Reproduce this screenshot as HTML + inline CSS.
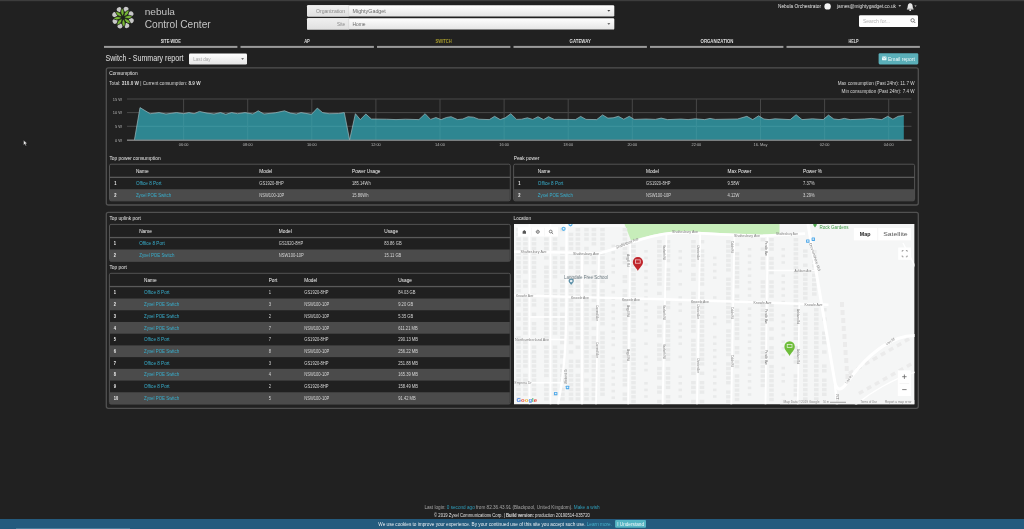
<!DOCTYPE html>
<html><head><meta charset="utf-8"><title>Nebula Control Center</title>
<style>
html,body{margin:0;padding:0;background:#212121;width:1024px;height:529px;overflow:hidden;}
svg{display:block;font-family:"Liberation Sans", sans-serif;will-change:transform;}
</style></head><body>
<svg width="1024" height="529" viewBox="0 0 1024 529">
<rect x="0" y="0" width="1024" height="529" fill="#212121"/>
<rect x="0" y="0" width="1024" height="1.2" fill="#3d3d3d"/>
<g transform="translate(123.0,17.6)"><circle cx="0" cy="-8.7" r="2.55" fill="#c8c8c8" transform="rotate(20)"/><circle cx="0" cy="-8.7" r="2.55" fill="#c8c8c8" transform="rotate(65)"/><circle cx="0" cy="-8.7" r="2.55" fill="#c8c8c8" transform="rotate(110)"/><circle cx="0" cy="-8.7" r="2.55" fill="#c8c8c8" transform="rotate(155)"/><circle cx="0" cy="-8.7" r="2.55" fill="#c8c8c8" transform="rotate(200)"/><circle cx="0" cy="-8.7" r="2.55" fill="#c8c8c8" transform="rotate(245)"/><circle cx="0" cy="-8.7" r="2.55" fill="#c8c8c8" transform="rotate(290)"/><circle cx="0" cy="-8.7" r="2.55" fill="#c8c8c8" transform="rotate(335)"/><path d="M0,-1.2 C1.2,-3 2.0,-5.2 1.5,-6.8 C1.1,-8 0.5,-9 0,-10.1 C-0.5,-9 -1.1,-8 -1.5,-6.8 C-2.0,-5.2 -1.2,-3 0,-1.2Z" fill="#76b633" stroke="#1b1b1b" stroke-width="0.75" transform="rotate(-6)"/><path d="M0,-1.2 C1.2,-3 2.0,-5.2 1.5,-6.8 C1.1,-8 0.5,-9 0,-10.1 C-0.5,-9 -1.1,-8 -1.5,-6.8 C-2.0,-5.2 -1.2,-3 0,-1.2Z" fill="#76b633" stroke="#1b1b1b" stroke-width="0.75" transform="rotate(39)"/><path d="M0,-1.2 C1.2,-3 2.0,-5.2 1.5,-6.8 C1.1,-8 0.5,-9 0,-10.1 C-0.5,-9 -1.1,-8 -1.5,-6.8 C-2.0,-5.2 -1.2,-3 0,-1.2Z" fill="#76b633" stroke="#1b1b1b" stroke-width="0.75" transform="rotate(84)"/><path d="M0,-1.2 C1.2,-3 2.0,-5.2 1.5,-6.8 C1.1,-8 0.5,-9 0,-10.1 C-0.5,-9 -1.1,-8 -1.5,-6.8 C-2.0,-5.2 -1.2,-3 0,-1.2Z" fill="#76b633" stroke="#1b1b1b" stroke-width="0.75" transform="rotate(129)"/><path d="M0,-1.2 C1.2,-3 2.0,-5.2 1.5,-6.8 C1.1,-8 0.5,-9 0,-10.1 C-0.5,-9 -1.1,-8 -1.5,-6.8 C-2.0,-5.2 -1.2,-3 0,-1.2Z" fill="#76b633" stroke="#1b1b1b" stroke-width="0.75" transform="rotate(174)"/><path d="M0,-1.2 C1.2,-3 2.0,-5.2 1.5,-6.8 C1.1,-8 0.5,-9 0,-10.1 C-0.5,-9 -1.1,-8 -1.5,-6.8 C-2.0,-5.2 -1.2,-3 0,-1.2Z" fill="#76b633" stroke="#1b1b1b" stroke-width="0.75" transform="rotate(219)"/><path d="M0,-1.2 C1.2,-3 2.0,-5.2 1.5,-6.8 C1.1,-8 0.5,-9 0,-10.1 C-0.5,-9 -1.1,-8 -1.5,-6.8 C-2.0,-5.2 -1.2,-3 0,-1.2Z" fill="#76b633" stroke="#1b1b1b" stroke-width="0.75" transform="rotate(264)"/><path d="M0,-1.2 C1.2,-3 2.0,-5.2 1.5,-6.8 C1.1,-8 0.5,-9 0,-10.1 C-0.5,-9 -1.1,-8 -1.5,-6.8 C-2.0,-5.2 -1.2,-3 0,-1.2Z" fill="#76b633" stroke="#1b1b1b" stroke-width="0.75" transform="rotate(309)"/></g>
<text x="144.70" y="15.06" font-size="9.6" fill="#c4c4c4" textLength="30.30" lengthAdjust="spacingAndGlyphs">nebula</text>
<text x="144.70" y="27.94" font-size="10.4" fill="#c4c4c4" textLength="66.00" lengthAdjust="spacingAndGlyphs">Control Center</text>
<defs><linearGradient id="gsel" x1="0" y1="0" x2="0" y2="1"><stop offset="0" stop-color="#ffffff"/><stop offset="1" stop-color="#e4e4e4"/></linearGradient><linearGradient id="glab" x1="0" y1="0" x2="0" y2="1"><stop offset="0" stop-color="#f0f0f0"/><stop offset="1" stop-color="#e0e0e0"/></linearGradient></defs>
<rect x="307" y="5.2" width="307.3" height="11.3" rx="1.2" fill="url(#gsel)"/>
<rect x="307" y="5.2" width="42" height="11.3" rx="1.2" fill="url(#glab)"/>
<rect x="348.5" y="5.2" width="0.6" height="11.3" fill="#d6d6d6"/>
<text x="316.00" y="13.12" font-size="5.6" fill="#8a8a8a" textLength="29.00" lengthAdjust="spacingAndGlyphs">Organization</text>
<text x="352.50" y="13.12" font-size="5.6" fill="#6a6a6a" textLength="33.30" lengthAdjust="spacingAndGlyphs">MightyGadget</text>
<path d="M607.3,10.100000000000001 h3 l-1.5,1.6z" fill="#444"/>
<rect x="307" y="18.3" width="307.3" height="11.3" rx="1.2" fill="url(#gsel)"/>
<rect x="307" y="18.3" width="42" height="11.3" rx="1.2" fill="url(#glab)"/>
<rect x="348.5" y="18.3" width="0.6" height="11.3" fill="#d6d6d6"/>
<text x="337.00" y="26.22" font-size="5.6" fill="#8a8a8a" textLength="8.00" lengthAdjust="spacingAndGlyphs">Site</text>
<text x="352.50" y="26.22" font-size="5.6" fill="#6a6a6a" textLength="13.10" lengthAdjust="spacingAndGlyphs">Home</text>
<path d="M607.3,23.200000000000003 h3 l-1.5,1.6z" fill="#444"/>
<text x="778.00" y="8.24" font-size="5.4" fill="#e6e6e6" textLength="43.00" lengthAdjust="spacingAndGlyphs">Nebula Orchestrator</text>
<circle cx="827.6" cy="6.4" r="3.2" fill="#f4f4f4"/>
<text x="837.00" y="8.04" font-size="5.4" fill="#e0e0e0" textLength="59.00" lengthAdjust="spacingAndGlyphs">james@mightygadget.co.uk</text>
<path d="M898.5,5.2 h2.6 l-1.3,1.5z" fill="#ddd"/>
<path d="M907.2,8.8 C907.6,8 907.6,6.8 907.9,5.3 C908.2,3.9 909.2,3.3 910.2,3.3 C911.2,3.3 912.2,3.9 912.5,5.3 C912.8,6.8 912.8,8 913.2,8.8 Z" fill="#e8e8e8"/>
<rect x="906.8" y="8.4" width="6.8" height="1.1" rx="0.5" fill="#e8e8e8"/><circle cx="910.2" cy="10.2" r="0.9" fill="#e8e8e8"/>
<path d="M914.3,5.4 h2.4 l-1.2,1.4z" fill="#ddd"/>
<rect x="859" y="15.2" width="59" height="11.8" rx="1.3" fill="#ffffff"/>
<text x="863.00" y="23.36" font-size="6.0" fill="#b4b4b4" textLength="27.00" lengthAdjust="spacingAndGlyphs">Search for...</text>
<circle cx="912.6" cy="20.3" r="1.7" fill="none" stroke="#666" stroke-width="0.8"/><path d="M913.8,21.5 l1.5,1.5" stroke="#666" stroke-width="0.9"/>
<rect x="104.00" y="45.9" width="133.4" height="2" fill="#9b9b9b"/>
<text x="160.65" y="42.76" font-size="4.6" fill="#dedede" font-weight="bold" textLength="20.10" lengthAdjust="spacingAndGlyphs">SITE-WIDE</text>
<rect x="240.50" y="45.9" width="133.4" height="2" fill="#9b9b9b"/>
<text x="304.15" y="42.76" font-size="4.6" fill="#dedede" font-weight="bold" textLength="5.70" lengthAdjust="spacingAndGlyphs">AP</text>
<rect x="377.00" y="45.9" width="133.4" height="2" fill="#9b9b9b"/>
<text x="435.60" y="42.76" font-size="4.6" fill="#a89c2c" font-weight="bold" textLength="16.20" lengthAdjust="spacingAndGlyphs">SWITCH</text>
<rect x="513.50" y="45.9" width="133.4" height="2" fill="#9b9b9b"/>
<text x="569.55" y="42.76" font-size="4.6" fill="#dedede" font-weight="bold" textLength="21.30" lengthAdjust="spacingAndGlyphs">GATEWAY</text>
<rect x="650.00" y="45.9" width="133.4" height="2" fill="#9b9b9b"/>
<text x="700.60" y="42.76" font-size="4.6" fill="#dedede" font-weight="bold" textLength="32.80" lengthAdjust="spacingAndGlyphs">ORGANIZATION</text>
<rect x="786.50" y="45.9" width="133.4" height="2" fill="#9b9b9b"/>
<text x="848.40" y="42.76" font-size="4.6" fill="#dedede" font-weight="bold" textLength="10.20" lengthAdjust="spacingAndGlyphs">HELP</text>
<text x="105.50" y="61.12" font-size="8.4" fill="#e2e2e2" textLength="78.10" lengthAdjust="spacingAndGlyphs">Switch - Summary report</text>
<rect x="189" y="53.6" width="58" height="10.9" rx="1.3" fill="url(#gsel)"/>
<text x="193.20" y="61.04" font-size="5.4" fill="#a8a8a8" textLength="17.50" lengthAdjust="spacingAndGlyphs">Last day</text>
<path d="M241.2,58.3 h2.8 l-1.4,1.5z" fill="#444"/>
<rect x="878.6" y="53.2" width="39.7" height="11.2" rx="1.3" fill="#5aafb9"/>
<rect x="882" y="56.6" width="4.5" height="3.6" rx="0.4" fill="#e6f6f8"/><path d="M882,56.8 l2.25,1.8 l2.25,-1.8" fill="none" stroke="#5db5bf" stroke-width="0.5"/>
<text x="888.00" y="60.74" font-size="5.4" fill="#eef8f9" textLength="26.80" lengthAdjust="spacingAndGlyphs">Email report</text>
<rect x="106.3" y="67.8" width="812" height="137.2" rx="2" fill="none" stroke="#515151" stroke-width="1.3"/>
<rect x="106.3" y="212.3" width="812" height="196" rx="2" fill="none" stroke="#515151" stroke-width="1.3"/>
<text x="109.20" y="75.04" font-size="5.4" fill="#e6e6e6" textLength="28.50" lengthAdjust="spacingAndGlyphs">Consumption</text>
<text x="109.3" y="84.9" font-size="5.2" fill="#d8d8d8" textLength="91.3" lengthAdjust="spacingAndGlyphs">Total: <tspan font-weight="bold">310.0 W</tspan> | Current consumption: <tspan font-weight="bold">8.9 W</tspan></text>
<text x="837.70" y="84.87" font-size="5.2" fill="#d8d8d8" textLength="76.90" lengthAdjust="spacingAndGlyphs">Max consumption (Past 24hr): 11.7 W</text>
<text x="841.60" y="92.97" font-size="5.2" fill="#d8d8d8" textLength="73.00" lengthAdjust="spacingAndGlyphs">Min consumption (Past 24hr): 7.4 W</text>
<rect x="127" y="98.50" width="784.5" height="1" fill="#4a4a4a"/>
<text x="112.66" y="100.58" font-size="4.4" fill="#b8b8b8" textLength="9.34" lengthAdjust="spacingAndGlyphs">15 W</text>
<rect x="127" y="112.10" width="784.5" height="1" fill="#4a4a4a"/>
<text x="112.66" y="114.18" font-size="4.4" fill="#b8b8b8" textLength="9.34" lengthAdjust="spacingAndGlyphs">10 W</text>
<rect x="127" y="125.80" width="784.5" height="1" fill="#4a4a4a"/>
<text x="114.89" y="127.88" font-size="4.4" fill="#b8b8b8" textLength="7.11" lengthAdjust="spacingAndGlyphs">5 W</text>
<rect x="127" y="139.70" width="784.5" height="1" fill="#4a4a4a"/>
<text x="114.89" y="141.78" font-size="4.4" fill="#b8b8b8" textLength="7.11" lengthAdjust="spacingAndGlyphs">0 W</text>
<rect x="183.10" y="99" width="1" height="41" fill="#474747"/>
<text x="178.72" y="145.81" font-size="4.2" fill="#b8b8b8" textLength="9.76" lengthAdjust="spacingAndGlyphs">06:00</text>
<rect x="247.20" y="99" width="1" height="41" fill="#474747"/>
<text x="242.82" y="145.81" font-size="4.2" fill="#b8b8b8" textLength="9.76" lengthAdjust="spacingAndGlyphs">08:00</text>
<rect x="311.30" y="99" width="1" height="41" fill="#474747"/>
<text x="306.92" y="145.81" font-size="4.2" fill="#b8b8b8" textLength="9.76" lengthAdjust="spacingAndGlyphs">10:00</text>
<rect x="375.40" y="99" width="1" height="41" fill="#474747"/>
<text x="371.02" y="145.81" font-size="4.2" fill="#b8b8b8" textLength="9.76" lengthAdjust="spacingAndGlyphs">12:00</text>
<rect x="439.50" y="99" width="1" height="41" fill="#474747"/>
<text x="435.12" y="145.81" font-size="4.2" fill="#b8b8b8" textLength="9.76" lengthAdjust="spacingAndGlyphs">14:00</text>
<rect x="503.60" y="99" width="1" height="41" fill="#474747"/>
<text x="499.22" y="145.81" font-size="4.2" fill="#b8b8b8" textLength="9.76" lengthAdjust="spacingAndGlyphs">16:00</text>
<rect x="567.70" y="99" width="1" height="41" fill="#474747"/>
<text x="563.32" y="145.81" font-size="4.2" fill="#b8b8b8" textLength="9.76" lengthAdjust="spacingAndGlyphs">18:00</text>
<rect x="631.80" y="99" width="1" height="41" fill="#474747"/>
<text x="627.42" y="145.81" font-size="4.2" fill="#b8b8b8" textLength="9.76" lengthAdjust="spacingAndGlyphs">20:00</text>
<rect x="695.90" y="99" width="1" height="41" fill="#474747"/>
<text x="691.52" y="145.81" font-size="4.2" fill="#b8b8b8" textLength="9.76" lengthAdjust="spacingAndGlyphs">22:00</text>
<rect x="760.00" y="99" width="1" height="41" fill="#474747"/>
<text x="753.56" y="145.81" font-size="4.2" fill="#b8b8b8" textLength="13.87" lengthAdjust="spacingAndGlyphs">16. May</text>
<rect x="824.10" y="99" width="1" height="41" fill="#474747"/>
<text x="819.72" y="145.81" font-size="4.2" fill="#b8b8b8" textLength="9.76" lengthAdjust="spacingAndGlyphs">02:00</text>
<rect x="888.20" y="99" width="1" height="41" fill="#474747"/>
<text x="883.82" y="145.81" font-size="4.2" fill="#b8b8b8" textLength="9.76" lengthAdjust="spacingAndGlyphs">04:00</text>
<path d="M134.4,140.2 L134.4,140.1 140.0,107.6 150.2,113.7 159.0,112.6 166.0,114.0 176.6,112.6 183.6,113.7 188.9,112.6 194.1,113.7 199.4,111.4 207.0,113.1 214.0,114.0 220.5,112.6 225.8,114.3 231.6,112.6 237.5,113.7 245.0,112.6 252.9,114.0 258.2,110.8 264.0,114.0 275.2,112.8 284.5,110.8 290.4,113.1 296.3,114.0 301.0,112.6 311.5,114.3 317.3,108.1 322.6,112.6 329.1,113.7 338.4,113.5 344.3,112.6 349.6,140.0 355.4,113.7 360.3,119.6 365.8,114.0 371.4,119.0 386.6,119.2 396.0,119.6 405.4,119.2 418.9,119.6 425.1,113.7 430.6,119.4 435.9,117.5 441.1,119.6 446.4,117.5 451.1,116.7 457.5,119.6 462.8,119.0 468.1,116.7 473.5,117.2 478.8,119.2 489.3,119.6 494.6,116.3 500.2,119.6 505.2,117.8 510.8,113.7 516.6,119.4 521.6,119.2 527.4,117.8 532.7,119.4 538.0,116.7 543.6,119.6 548.5,116.7 554.4,119.4 566.1,119.4 575.5,119.6 580.7,116.4 586.0,119.4 596.7,119.6 602.6,114.9 607.9,118.1 613.1,117.8 618.4,116.3 623.7,119.2 629.3,116.3 634.2,119.4 645.9,119.0 655.3,119.4 661.2,118.1 667.6,119.6 681.1,119.0 688.1,119.6 695.2,118.8 704.7,119.6 710.0,118.4 715.2,119.4 737.5,119.0 746.9,116.3 752.7,119.6 758.6,115.8 763.9,119.0 769.1,119.6 775.0,118.8 790.2,119.6 796.1,114.7 802.0,119.6 812.5,118.8 823.2,119.6 828.5,115.1 833.8,119.0 839.0,119.6 844.3,118.4 850.2,119.6 864.2,119.0 871.3,118.4 881.8,119.6 887.7,116.3 892.9,119.2 898.2,116.3 903.8,115.5 L903.8,140.2 Z" fill="#2e8691"/>
<clipPath id="careaclip"><path d="M134.4,140.2 L134.4,140.1 140.0,107.6 150.2,113.7 159.0,112.6 166.0,114.0 176.6,112.6 183.6,113.7 188.9,112.6 194.1,113.7 199.4,111.4 207.0,113.1 214.0,114.0 220.5,112.6 225.8,114.3 231.6,112.6 237.5,113.7 245.0,112.6 252.9,114.0 258.2,110.8 264.0,114.0 275.2,112.8 284.5,110.8 290.4,113.1 296.3,114.0 301.0,112.6 311.5,114.3 317.3,108.1 322.6,112.6 329.1,113.7 338.4,113.5 344.3,112.6 349.6,140.0 355.4,113.7 360.3,119.6 365.8,114.0 371.4,119.0 386.6,119.2 396.0,119.6 405.4,119.2 418.9,119.6 425.1,113.7 430.6,119.4 435.9,117.5 441.1,119.6 446.4,117.5 451.1,116.7 457.5,119.6 462.8,119.0 468.1,116.7 473.5,117.2 478.8,119.2 489.3,119.6 494.6,116.3 500.2,119.6 505.2,117.8 510.8,113.7 516.6,119.4 521.6,119.2 527.4,117.8 532.7,119.4 538.0,116.7 543.6,119.6 548.5,116.7 554.4,119.4 566.1,119.4 575.5,119.6 580.7,116.4 586.0,119.4 596.7,119.6 602.6,114.9 607.9,118.1 613.1,117.8 618.4,116.3 623.7,119.2 629.3,116.3 634.2,119.4 645.9,119.0 655.3,119.4 661.2,118.1 667.6,119.6 681.1,119.0 688.1,119.6 695.2,118.8 704.7,119.6 710.0,118.4 715.2,119.4 737.5,119.0 746.9,116.3 752.7,119.6 758.6,115.8 763.9,119.0 769.1,119.6 775.0,118.8 790.2,119.6 796.1,114.7 802.0,119.6 812.5,118.8 823.2,119.6 828.5,115.1 833.8,119.0 839.0,119.6 844.3,118.4 850.2,119.6 864.2,119.0 871.3,118.4 881.8,119.6 887.7,116.3 892.9,119.2 898.2,116.3 903.8,115.5 L903.8,140.2 Z"/></clipPath>
<g clip-path="url(#careaclip)">
<rect x="127" y="125.8" width="784" height="1" fill="#3f949e"/>
<rect x="183.10" y="99" width="1" height="41" fill="#3b9099"/>
<rect x="247.20" y="99" width="1" height="41" fill="#3b9099"/>
<rect x="311.30" y="99" width="1" height="41" fill="#3b9099"/>
<rect x="375.40" y="99" width="1" height="41" fill="#3b9099"/>
<rect x="439.50" y="99" width="1" height="41" fill="#3b9099"/>
<rect x="503.60" y="99" width="1" height="41" fill="#3b9099"/>
<rect x="567.70" y="99" width="1" height="41" fill="#3b9099"/>
<rect x="631.80" y="99" width="1" height="41" fill="#3b9099"/>
<rect x="695.90" y="99" width="1" height="41" fill="#3b9099"/>
<rect x="760.00" y="99" width="1" height="41" fill="#3b9099"/>
<rect x="824.10" y="99" width="1" height="41" fill="#3b9099"/>
<rect x="888.20" y="99" width="1" height="41" fill="#3b9099"/>
</g>
<polyline points="134.4,140.1 140.0,107.6 150.2,113.7 159.0,112.6 166.0,114.0 176.6,112.6 183.6,113.7 188.9,112.6 194.1,113.7 199.4,111.4 207.0,113.1 214.0,114.0 220.5,112.6 225.8,114.3 231.6,112.6 237.5,113.7 245.0,112.6 252.9,114.0 258.2,110.8 264.0,114.0 275.2,112.8 284.5,110.8 290.4,113.1 296.3,114.0 301.0,112.6 311.5,114.3 317.3,108.1 322.6,112.6 329.1,113.7 338.4,113.5 344.3,112.6 349.6,140.0 355.4,113.7 360.3,119.6 365.8,114.0 371.4,119.0 386.6,119.2 396.0,119.6 405.4,119.2 418.9,119.6 425.1,113.7 430.6,119.4 435.9,117.5 441.1,119.6 446.4,117.5 451.1,116.7 457.5,119.6 462.8,119.0 468.1,116.7 473.5,117.2 478.8,119.2 489.3,119.6 494.6,116.3 500.2,119.6 505.2,117.8 510.8,113.7 516.6,119.4 521.6,119.2 527.4,117.8 532.7,119.4 538.0,116.7 543.6,119.6 548.5,116.7 554.4,119.4 566.1,119.4 575.5,119.6 580.7,116.4 586.0,119.4 596.7,119.6 602.6,114.9 607.9,118.1 613.1,117.8 618.4,116.3 623.7,119.2 629.3,116.3 634.2,119.4 645.9,119.0 655.3,119.4 661.2,118.1 667.6,119.6 681.1,119.0 688.1,119.6 695.2,118.8 704.7,119.6 710.0,118.4 715.2,119.4 737.5,119.0 746.9,116.3 752.7,119.6 758.6,115.8 763.9,119.0 769.1,119.6 775.0,118.8 790.2,119.6 796.1,114.7 802.0,119.6 812.5,118.8 823.2,119.6 828.5,115.1 833.8,119.0 839.0,119.6 844.3,118.4 850.2,119.6 864.2,119.0 871.3,118.4 881.8,119.6 887.7,116.3 892.9,119.2 898.2,116.3 903.8,115.5" fill="none" stroke="#9fb9bd" stroke-width="0.7"/>
<rect x="127" y="139.6" width="784.5" height="1.2" fill="#8a8a8a"/>
<text x="109.40" y="160.07" font-size="5.2" fill="#e6e6e6" textLength="51.22" lengthAdjust="spacingAndGlyphs">Top power consumption</text>
<rect x="109.50" y="164.20" width="400.80" height="36.60" rx="1.5" fill="#202020" stroke="#535353" stroke-width="1"/>
<rect x="110.00" y="189.20" width="399.80" height="11.60" fill="#4b4b4b"/>
<rect x="109.50" y="176.70" width="400.80" height="1.3" fill="#5a5a5a"/>
<text x="135.90" y="172.70" font-size="5.0" fill="#f4f4f4" textLength="12.67" lengthAdjust="spacingAndGlyphs">Name</text>
<text x="259.30" y="172.70" font-size="5.0" fill="#f4f4f4" textLength="12.94" lengthAdjust="spacingAndGlyphs">Model</text>
<text x="352.00" y="172.70" font-size="5.0" fill="#f4f4f4" textLength="28.51" lengthAdjust="spacingAndGlyphs">Power Usage</text>
<text x="114.20" y="185.09" font-size="4.7" fill="#f0f0f0" font-weight="bold" textLength="2.22" lengthAdjust="spacingAndGlyphs">1</text>
<text x="135.90" y="185.13" font-size="4.8" fill="#38b0cf" textLength="25.59" lengthAdjust="spacingAndGlyphs">Office 8 Port</text>
<text x="259.30" y="185.09" font-size="4.7" fill="#d6d6d6" textLength="24.38" lengthAdjust="spacingAndGlyphs">GS1920-8HP</text>
<text x="352.00" y="185.09" font-size="4.7" fill="#d6d6d6" textLength="18.69" lengthAdjust="spacingAndGlyphs">185.14Wh</text>
<text x="114.20" y="196.69" font-size="4.7" fill="#f0f0f0" font-weight="bold" textLength="2.22" lengthAdjust="spacingAndGlyphs">2</text>
<text x="135.90" y="196.73" font-size="4.8" fill="#38b0cf" textLength="35.21" lengthAdjust="spacingAndGlyphs">Zyxel POE Switch</text>
<text x="259.30" y="196.69" font-size="4.7" fill="#d6d6d6" textLength="25.07" lengthAdjust="spacingAndGlyphs">NSW100-10P</text>
<text x="352.00" y="196.69" font-size="4.7" fill="#d6d6d6" textLength="16.41" lengthAdjust="spacingAndGlyphs">15.86Wh</text>
<text x="513.70" y="159.87" font-size="5.2" fill="#e6e6e6" textLength="25.61" lengthAdjust="spacingAndGlyphs">Peak power</text>
<rect x="513.60" y="164.20" width="401.00" height="36.60" rx="1.5" fill="#202020" stroke="#535353" stroke-width="1"/>
<rect x="514.10" y="189.20" width="400.00" height="11.60" fill="#4b4b4b"/>
<rect x="513.60" y="176.70" width="401.00" height="1.3" fill="#5a5a5a"/>
<text x="537.80" y="172.70" font-size="5.0" fill="#f4f4f4" textLength="12.67" lengthAdjust="spacingAndGlyphs">Name</text>
<text x="646.00" y="172.70" font-size="5.0" fill="#f4f4f4" textLength="12.94" lengthAdjust="spacingAndGlyphs">Model</text>
<text x="727.60" y="172.70" font-size="5.0" fill="#f4f4f4" textLength="23.76" lengthAdjust="spacingAndGlyphs">Max Power</text>
<text x="803.00" y="172.70" font-size="5.0" fill="#f4f4f4" textLength="19.01" lengthAdjust="spacingAndGlyphs">Power %</text>
<text x="518.30" y="185.09" font-size="4.7" fill="#f0f0f0" font-weight="bold" textLength="2.22" lengthAdjust="spacingAndGlyphs">1</text>
<text x="537.80" y="185.13" font-size="4.8" fill="#38b0cf" textLength="25.59" lengthAdjust="spacingAndGlyphs">Office 8 Port</text>
<text x="646.00" y="185.09" font-size="4.7" fill="#d6d6d6" textLength="24.38" lengthAdjust="spacingAndGlyphs">GS1920-8HP</text>
<text x="727.60" y="185.09" font-size="4.7" fill="#d6d6d6" textLength="11.85" lengthAdjust="spacingAndGlyphs">9.58W</text>
<text x="803.00" y="185.09" font-size="4.7" fill="#d6d6d6" textLength="11.62" lengthAdjust="spacingAndGlyphs">7.37%</text>
<text x="518.30" y="196.69" font-size="4.7" fill="#f0f0f0" font-weight="bold" textLength="2.22" lengthAdjust="spacingAndGlyphs">2</text>
<text x="537.80" y="196.73" font-size="4.8" fill="#38b0cf" textLength="35.21" lengthAdjust="spacingAndGlyphs">Zyxel POE Switch</text>
<text x="646.00" y="196.69" font-size="4.7" fill="#d6d6d6" textLength="25.07" lengthAdjust="spacingAndGlyphs">NSW100-10P</text>
<text x="727.60" y="196.69" font-size="4.7" fill="#d6d6d6" textLength="11.85" lengthAdjust="spacingAndGlyphs">4.12W</text>
<text x="803.00" y="196.69" font-size="4.7" fill="#d6d6d6" textLength="11.62" lengthAdjust="spacingAndGlyphs">3.29%</text>
<text x="109.40" y="219.87" font-size="5.2" fill="#e6e6e6" textLength="31.54" lengthAdjust="spacingAndGlyphs">Top uplink port</text>
<rect x="109.50" y="224.40" width="400.80" height="36.80" rx="1.5" fill="#202020" stroke="#535353" stroke-width="1"/>
<rect x="110.00" y="249.50" width="399.80" height="11.70" fill="#4b4b4b"/>
<rect x="109.50" y="236.90" width="400.80" height="1.3" fill="#5a5a5a"/>
<text x="139.20" y="232.90" font-size="5.0" fill="#f4f4f4" textLength="12.67" lengthAdjust="spacingAndGlyphs">Name</text>
<text x="278.80" y="232.90" font-size="5.0" fill="#f4f4f4" textLength="12.94" lengthAdjust="spacingAndGlyphs">Model</text>
<text x="384.30" y="232.90" font-size="5.0" fill="#f4f4f4" textLength="13.73" lengthAdjust="spacingAndGlyphs">Usage</text>
<text x="113.80" y="245.34" font-size="4.7" fill="#f0f0f0" font-weight="bold" textLength="2.22" lengthAdjust="spacingAndGlyphs">1</text>
<text x="139.20" y="245.38" font-size="4.8" fill="#38b0cf" textLength="25.59" lengthAdjust="spacingAndGlyphs">Office 8 Port</text>
<text x="278.80" y="245.34" font-size="4.7" fill="#d6d6d6" textLength="24.38" lengthAdjust="spacingAndGlyphs">GS1920-8HP</text>
<text x="384.30" y="245.34" font-size="4.7" fill="#d6d6d6" textLength="17.32" lengthAdjust="spacingAndGlyphs">83.86 GB</text>
<text x="113.80" y="257.04" font-size="4.7" fill="#f0f0f0" font-weight="bold" textLength="2.22" lengthAdjust="spacingAndGlyphs">2</text>
<text x="139.20" y="257.08" font-size="4.8" fill="#38b0cf" textLength="35.21" lengthAdjust="spacingAndGlyphs">Zyxel POE Switch</text>
<text x="278.80" y="257.04" font-size="4.7" fill="#d6d6d6" textLength="25.07" lengthAdjust="spacingAndGlyphs">NSW100-10P</text>
<text x="384.30" y="257.04" font-size="4.7" fill="#d6d6d6" textLength="17.02" lengthAdjust="spacingAndGlyphs">15.11 GB</text>
<text x="109.40" y="268.77" font-size="5.2" fill="#e6e6e6" textLength="17.52" lengthAdjust="spacingAndGlyphs">Top port</text>
<rect x="109.40" y="273.30" width="400.90" height="130.70" rx="1.5" fill="#202020" stroke="#535353" stroke-width="1"/>
<rect x="109.90" y="298.52" width="399.90" height="11.72" fill="#4b4b4b"/>
<rect x="109.90" y="321.96" width="399.90" height="11.72" fill="#4b4b4b"/>
<rect x="109.90" y="345.40" width="399.90" height="11.72" fill="#4b4b4b"/>
<rect x="109.90" y="368.84" width="399.90" height="11.72" fill="#4b4b4b"/>
<rect x="109.90" y="392.28" width="399.90" height="11.72" fill="#4b4b4b"/>
<rect x="109.40" y="285.90" width="400.90" height="1.3" fill="#5a5a5a"/>
<text x="144.00" y="281.85" font-size="5.0" fill="#f4f4f4" textLength="12.67" lengthAdjust="spacingAndGlyphs">Name</text>
<text x="268.70" y="281.85" font-size="5.0" fill="#f4f4f4" textLength="8.71" lengthAdjust="spacingAndGlyphs">Port</text>
<text x="304.20" y="281.85" font-size="5.0" fill="#f4f4f4" textLength="12.94" lengthAdjust="spacingAndGlyphs">Model</text>
<text x="398.20" y="281.85" font-size="5.0" fill="#f4f4f4" textLength="13.73" lengthAdjust="spacingAndGlyphs">Usage</text>
<text x="113.80" y="294.35" font-size="4.7" fill="#f0f0f0" font-weight="bold" textLength="2.22" lengthAdjust="spacingAndGlyphs">1</text>
<text x="144.00" y="294.39" font-size="4.8" fill="#38b0cf" textLength="25.59" lengthAdjust="spacingAndGlyphs">Office 8 Port</text>
<text x="268.70" y="294.35" font-size="4.7" fill="#d6d6d6" textLength="2.28" lengthAdjust="spacingAndGlyphs">1</text>
<text x="304.20" y="294.35" font-size="4.7" fill="#d6d6d6" textLength="24.38" lengthAdjust="spacingAndGlyphs">GS1920-8HP</text>
<text x="398.20" y="294.35" font-size="4.7" fill="#d6d6d6" textLength="17.32" lengthAdjust="spacingAndGlyphs">84.03 GB</text>
<text x="113.80" y="306.07" font-size="4.7" fill="#f0f0f0" font-weight="bold" textLength="2.22" lengthAdjust="spacingAndGlyphs">2</text>
<text x="144.00" y="306.11" font-size="4.8" fill="#38b0cf" textLength="35.21" lengthAdjust="spacingAndGlyphs">Zyxel POE Switch</text>
<text x="268.70" y="306.07" font-size="4.7" fill="#d6d6d6" textLength="2.28" lengthAdjust="spacingAndGlyphs">3</text>
<text x="304.20" y="306.07" font-size="4.7" fill="#d6d6d6" textLength="25.07" lengthAdjust="spacingAndGlyphs">NSW100-10P</text>
<text x="398.20" y="306.07" font-size="4.7" fill="#d6d6d6" textLength="15.04" lengthAdjust="spacingAndGlyphs">9.20 GB</text>
<text x="113.80" y="317.79" font-size="4.7" fill="#f0f0f0" font-weight="bold" textLength="2.22" lengthAdjust="spacingAndGlyphs">3</text>
<text x="144.00" y="317.83" font-size="4.8" fill="#38b0cf" textLength="35.21" lengthAdjust="spacingAndGlyphs">Zyxel POE Switch</text>
<text x="268.70" y="317.79" font-size="4.7" fill="#d6d6d6" textLength="2.28" lengthAdjust="spacingAndGlyphs">2</text>
<text x="304.20" y="317.79" font-size="4.7" fill="#d6d6d6" textLength="25.07" lengthAdjust="spacingAndGlyphs">NSW100-10P</text>
<text x="398.20" y="317.79" font-size="4.7" fill="#d6d6d6" textLength="15.04" lengthAdjust="spacingAndGlyphs">5.35 GB</text>
<text x="113.80" y="329.51" font-size="4.7" fill="#f0f0f0" font-weight="bold" textLength="2.22" lengthAdjust="spacingAndGlyphs">4</text>
<text x="144.00" y="329.55" font-size="4.8" fill="#38b0cf" textLength="35.21" lengthAdjust="spacingAndGlyphs">Zyxel POE Switch</text>
<text x="268.70" y="329.51" font-size="4.7" fill="#d6d6d6" textLength="2.28" lengthAdjust="spacingAndGlyphs">7</text>
<text x="304.20" y="329.51" font-size="4.7" fill="#d6d6d6" textLength="25.07" lengthAdjust="spacingAndGlyphs">NSW100-10P</text>
<text x="398.20" y="329.51" font-size="4.7" fill="#d6d6d6" textLength="19.52" lengthAdjust="spacingAndGlyphs">611.21 MB</text>
<text x="113.80" y="341.23" font-size="4.7" fill="#f0f0f0" font-weight="bold" textLength="2.22" lengthAdjust="spacingAndGlyphs">5</text>
<text x="144.00" y="341.27" font-size="4.8" fill="#38b0cf" textLength="25.59" lengthAdjust="spacingAndGlyphs">Office 8 Port</text>
<text x="268.70" y="341.23" font-size="4.7" fill="#d6d6d6" textLength="2.28" lengthAdjust="spacingAndGlyphs">7</text>
<text x="304.20" y="341.23" font-size="4.7" fill="#d6d6d6" textLength="24.38" lengthAdjust="spacingAndGlyphs">GS1920-8HP</text>
<text x="398.20" y="341.23" font-size="4.7" fill="#d6d6d6" textLength="19.83" lengthAdjust="spacingAndGlyphs">290.13 MB</text>
<text x="113.80" y="352.95" font-size="4.7" fill="#f0f0f0" font-weight="bold" textLength="2.22" lengthAdjust="spacingAndGlyphs">6</text>
<text x="144.00" y="352.99" font-size="4.8" fill="#38b0cf" textLength="35.21" lengthAdjust="spacingAndGlyphs">Zyxel POE Switch</text>
<text x="268.70" y="352.95" font-size="4.7" fill="#d6d6d6" textLength="2.28" lengthAdjust="spacingAndGlyphs">8</text>
<text x="304.20" y="352.95" font-size="4.7" fill="#d6d6d6" textLength="25.07" lengthAdjust="spacingAndGlyphs">NSW100-10P</text>
<text x="398.20" y="352.95" font-size="4.7" fill="#d6d6d6" textLength="19.83" lengthAdjust="spacingAndGlyphs">256.22 MB</text>
<text x="113.80" y="364.67" font-size="4.7" fill="#f0f0f0" font-weight="bold" textLength="2.22" lengthAdjust="spacingAndGlyphs">7</text>
<text x="144.00" y="364.71" font-size="4.8" fill="#38b0cf" textLength="25.59" lengthAdjust="spacingAndGlyphs">Office 8 Port</text>
<text x="268.70" y="364.67" font-size="4.7" fill="#d6d6d6" textLength="2.28" lengthAdjust="spacingAndGlyphs">3</text>
<text x="304.20" y="364.67" font-size="4.7" fill="#d6d6d6" textLength="24.38" lengthAdjust="spacingAndGlyphs">GS1920-8HP</text>
<text x="398.20" y="364.67" font-size="4.7" fill="#d6d6d6" textLength="19.83" lengthAdjust="spacingAndGlyphs">251.88 MB</text>
<text x="113.80" y="376.39" font-size="4.7" fill="#f0f0f0" font-weight="bold" textLength="2.22" lengthAdjust="spacingAndGlyphs">8</text>
<text x="144.00" y="376.43" font-size="4.8" fill="#38b0cf" textLength="35.21" lengthAdjust="spacingAndGlyphs">Zyxel POE Switch</text>
<text x="268.70" y="376.39" font-size="4.7" fill="#d6d6d6" textLength="2.28" lengthAdjust="spacingAndGlyphs">4</text>
<text x="304.20" y="376.39" font-size="4.7" fill="#d6d6d6" textLength="25.07" lengthAdjust="spacingAndGlyphs">NSW100-10P</text>
<text x="398.20" y="376.39" font-size="4.7" fill="#d6d6d6" textLength="19.83" lengthAdjust="spacingAndGlyphs">165.39 MB</text>
<text x="113.80" y="388.11" font-size="4.7" fill="#f0f0f0" font-weight="bold" textLength="2.22" lengthAdjust="spacingAndGlyphs">9</text>
<text x="144.00" y="388.15" font-size="4.8" fill="#38b0cf" textLength="25.59" lengthAdjust="spacingAndGlyphs">Office 8 Port</text>
<text x="268.70" y="388.11" font-size="4.7" fill="#d6d6d6" textLength="2.28" lengthAdjust="spacingAndGlyphs">2</text>
<text x="304.20" y="388.11" font-size="4.7" fill="#d6d6d6" textLength="24.38" lengthAdjust="spacingAndGlyphs">GS1920-8HP</text>
<text x="398.20" y="388.11" font-size="4.7" fill="#d6d6d6" textLength="19.83" lengthAdjust="spacingAndGlyphs">158.49 MB</text>
<text x="113.80" y="399.83" font-size="4.7" fill="#f0f0f0" font-weight="bold" textLength="4.45" lengthAdjust="spacingAndGlyphs">10</text>
<text x="144.00" y="399.87" font-size="4.8" fill="#38b0cf" textLength="35.21" lengthAdjust="spacingAndGlyphs">Zyxel POE Switch</text>
<text x="268.70" y="399.83" font-size="4.7" fill="#d6d6d6" textLength="2.28" lengthAdjust="spacingAndGlyphs">5</text>
<text x="304.20" y="399.83" font-size="4.7" fill="#d6d6d6" textLength="25.07" lengthAdjust="spacingAndGlyphs">NSW100-10P</text>
<text x="398.20" y="399.83" font-size="4.7" fill="#d6d6d6" textLength="17.55" lengthAdjust="spacingAndGlyphs">91.42 MB</text>
<text x="513.60" y="220.07" font-size="5.2" fill="#e6e6e6" textLength="17.39" lengthAdjust="spacingAndGlyphs">Location</text>
<clipPath id="mclip"><rect x="514" y="224" width="400.6" height="180.5"/></clipPath>
<g clip-path="url(#mclip)">
<rect x="514" y="224" width="400.6" height="180.5" fill="#f5f6f6"/>
<path d="M624.5,224 L631,240.6 C645,236.5 662,231.6 684,231 L720,233 L760,234.6 L779.5,234.8 L779.5,224 Z" fill="#c7edba"/>
<rect x="516.2" y="228.0" width="4.6" height="3.4" fill="#e9eaea"/>
<rect x="516.2" y="232.7" width="4.6" height="3.4" fill="#e9eaea"/>
<rect x="516.2" y="237.4" width="4.6" height="3.4" fill="#e9eaea"/>
<rect x="516.2" y="242.1" width="4.6" height="3.4" fill="#e9eaea"/>
<rect x="516.2" y="246.8" width="4.6" height="3.4" fill="#e9eaea"/>
<rect x="516.2" y="251.5" width="4.6" height="3.4" fill="#e9eaea"/>
<rect x="516.2" y="256.2" width="4.6" height="3.4" fill="#e9eaea"/>
<rect x="516.2" y="260.9" width="4.6" height="3.4" fill="#e9eaea"/>
<rect x="516.2" y="265.6" width="4.6" height="3.4" fill="#e9eaea"/>
<rect x="516.2" y="270.3" width="4.6" height="3.4" fill="#e9eaea"/>
<rect x="516.2" y="275.0" width="4.6" height="3.4" fill="#e9eaea"/>
<rect x="516.2" y="279.7" width="4.6" height="3.4" fill="#e9eaea"/>
<rect x="516.2" y="284.4" width="4.6" height="3.4" fill="#e9eaea"/>
<rect x="516.2" y="289.1" width="4.6" height="3.4" fill="#e9eaea"/>
<rect x="516.2" y="293.8" width="4.6" height="3.4" fill="#e9eaea"/>
<rect x="516.2" y="298.5" width="4.6" height="3.4" fill="#e9eaea"/>
<rect x="516.2" y="303.2" width="4.6" height="3.4" fill="#e9eaea"/>
<rect x="516.2" y="312.6" width="4.6" height="3.4" fill="#e9eaea"/>
<rect x="516.2" y="317.3" width="4.6" height="3.4" fill="#e9eaea"/>
<rect x="516.2" y="326.7" width="4.6" height="3.4" fill="#e9eaea"/>
<rect x="516.2" y="336.1" width="4.6" height="3.4" fill="#e9eaea"/>
<rect x="516.2" y="340.8" width="4.6" height="3.4" fill="#e9eaea"/>
<rect x="516.2" y="345.5" width="4.6" height="3.4" fill="#e9eaea"/>
<rect x="516.2" y="350.2" width="4.6" height="3.4" fill="#e9eaea"/>
<rect x="516.2" y="354.9" width="4.6" height="3.4" fill="#e9eaea"/>
<rect x="516.2" y="359.6" width="4.6" height="3.4" fill="#e9eaea"/>
<rect x="516.2" y="364.3" width="4.6" height="3.4" fill="#e9eaea"/>
<rect x="516.2" y="369.0" width="4.6" height="3.4" fill="#e9eaea"/>
<rect x="516.2" y="373.7" width="4.6" height="3.4" fill="#e9eaea"/>
<rect x="516.2" y="378.4" width="4.6" height="3.4" fill="#e9eaea"/>
<rect x="516.2" y="383.1" width="4.6" height="3.4" fill="#e9eaea"/>
<rect x="516.2" y="387.8" width="4.6" height="3.4" fill="#e9eaea"/>
<rect x="516.2" y="392.5" width="4.6" height="3.4" fill="#e9eaea"/>
<rect x="516.2" y="397.2" width="4.6" height="3.4" fill="#e9eaea"/>
<rect x="523.1" y="228.0" width="4.6" height="3.4" fill="#e9eaea"/>
<rect x="523.1" y="232.7" width="4.6" height="3.4" fill="#e9eaea"/>
<rect x="523.1" y="237.4" width="4.6" height="3.4" fill="#e9eaea"/>
<rect x="523.1" y="242.1" width="4.6" height="3.4" fill="#e9eaea"/>
<rect x="523.1" y="246.8" width="4.6" height="3.4" fill="#e9eaea"/>
<rect x="523.1" y="251.5" width="4.6" height="3.4" fill="#e9eaea"/>
<rect x="523.1" y="256.2" width="4.6" height="3.4" fill="#e9eaea"/>
<rect x="523.1" y="260.9" width="4.6" height="3.4" fill="#e9eaea"/>
<rect x="523.1" y="265.6" width="4.6" height="3.4" fill="#e9eaea"/>
<rect x="523.1" y="270.3" width="4.6" height="3.4" fill="#e9eaea"/>
<rect x="523.1" y="279.7" width="4.6" height="3.4" fill="#e9eaea"/>
<rect x="523.1" y="284.4" width="4.6" height="3.4" fill="#e9eaea"/>
<rect x="523.1" y="293.8" width="4.6" height="3.4" fill="#e9eaea"/>
<rect x="523.1" y="298.5" width="4.6" height="3.4" fill="#e9eaea"/>
<rect x="523.1" y="303.2" width="4.6" height="3.4" fill="#e9eaea"/>
<rect x="523.1" y="307.9" width="4.6" height="3.4" fill="#e9eaea"/>
<rect x="523.1" y="312.6" width="4.6" height="3.4" fill="#e9eaea"/>
<rect x="523.1" y="317.3" width="4.6" height="3.4" fill="#e9eaea"/>
<rect x="523.1" y="322.0" width="4.6" height="3.4" fill="#e9eaea"/>
<rect x="523.1" y="326.7" width="4.6" height="3.4" fill="#e9eaea"/>
<rect x="523.1" y="331.4" width="4.6" height="3.4" fill="#e9eaea"/>
<rect x="523.1" y="340.8" width="4.6" height="3.4" fill="#e9eaea"/>
<rect x="523.1" y="345.5" width="4.6" height="3.4" fill="#e9eaea"/>
<rect x="523.1" y="350.2" width="4.6" height="3.4" fill="#e9eaea"/>
<rect x="523.1" y="354.9" width="4.6" height="3.4" fill="#e9eaea"/>
<rect x="523.1" y="359.6" width="4.6" height="3.4" fill="#e9eaea"/>
<rect x="523.1" y="364.3" width="4.6" height="3.4" fill="#e9eaea"/>
<rect x="523.1" y="373.7" width="4.6" height="3.4" fill="#e9eaea"/>
<rect x="523.1" y="378.4" width="4.6" height="3.4" fill="#e9eaea"/>
<rect x="523.1" y="383.1" width="4.6" height="3.4" fill="#e9eaea"/>
<rect x="523.1" y="387.8" width="4.6" height="3.4" fill="#e9eaea"/>
<rect x="523.1" y="392.5" width="4.6" height="3.4" fill="#e9eaea"/>
<rect x="531.7" y="228.0" width="4.6" height="3.4" fill="#e9eaea"/>
<rect x="531.7" y="232.7" width="4.6" height="3.4" fill="#e9eaea"/>
<rect x="531.7" y="237.4" width="4.6" height="3.4" fill="#e9eaea"/>
<rect x="531.7" y="242.1" width="4.6" height="3.4" fill="#e9eaea"/>
<rect x="531.7" y="246.8" width="4.6" height="3.4" fill="#e9eaea"/>
<rect x="531.7" y="251.5" width="4.6" height="3.4" fill="#e9eaea"/>
<rect x="531.7" y="256.2" width="4.6" height="3.4" fill="#e9eaea"/>
<rect x="531.7" y="260.9" width="4.6" height="3.4" fill="#e9eaea"/>
<rect x="531.7" y="265.6" width="4.6" height="3.4" fill="#e9eaea"/>
<rect x="531.7" y="270.3" width="4.6" height="3.4" fill="#e9eaea"/>
<rect x="531.7" y="275.0" width="4.6" height="3.4" fill="#e9eaea"/>
<rect x="531.7" y="279.7" width="4.6" height="3.4" fill="#e9eaea"/>
<rect x="531.7" y="284.4" width="4.6" height="3.4" fill="#e9eaea"/>
<rect x="531.7" y="293.8" width="4.6" height="3.4" fill="#e9eaea"/>
<rect x="531.7" y="298.5" width="4.6" height="3.4" fill="#e9eaea"/>
<rect x="531.7" y="303.2" width="4.6" height="3.4" fill="#e9eaea"/>
<rect x="531.7" y="312.6" width="4.6" height="3.4" fill="#e9eaea"/>
<rect x="531.7" y="322.0" width="4.6" height="3.4" fill="#e9eaea"/>
<rect x="531.7" y="326.7" width="4.6" height="3.4" fill="#e9eaea"/>
<rect x="531.7" y="331.4" width="4.6" height="3.4" fill="#e9eaea"/>
<rect x="531.7" y="345.5" width="4.6" height="3.4" fill="#e9eaea"/>
<rect x="531.7" y="350.2" width="4.6" height="3.4" fill="#e9eaea"/>
<rect x="531.7" y="354.9" width="4.6" height="3.4" fill="#e9eaea"/>
<rect x="531.7" y="359.6" width="4.6" height="3.4" fill="#e9eaea"/>
<rect x="531.7" y="364.3" width="4.6" height="3.4" fill="#e9eaea"/>
<rect x="531.7" y="369.0" width="4.6" height="3.4" fill="#e9eaea"/>
<rect x="531.7" y="373.7" width="4.6" height="3.4" fill="#e9eaea"/>
<rect x="531.7" y="378.4" width="4.6" height="3.4" fill="#e9eaea"/>
<rect x="531.7" y="383.1" width="4.6" height="3.4" fill="#e9eaea"/>
<rect x="531.7" y="387.8" width="4.6" height="3.4" fill="#e9eaea"/>
<rect x="531.7" y="392.5" width="4.6" height="3.4" fill="#e9eaea"/>
<rect x="544.1" y="228.0" width="4.6" height="3.4" fill="#e9eaea"/>
<rect x="544.1" y="232.7" width="4.6" height="3.4" fill="#e9eaea"/>
<rect x="544.1" y="237.4" width="4.6" height="3.4" fill="#e9eaea"/>
<rect x="544.1" y="242.1" width="4.6" height="3.4" fill="#e9eaea"/>
<rect x="544.1" y="246.8" width="4.6" height="3.4" fill="#e9eaea"/>
<rect x="544.1" y="256.2" width="4.6" height="3.4" fill="#e9eaea"/>
<rect x="544.1" y="265.6" width="4.6" height="3.4" fill="#e9eaea"/>
<rect x="544.1" y="270.3" width="4.6" height="3.4" fill="#e9eaea"/>
<rect x="544.1" y="275.0" width="4.6" height="3.4" fill="#e9eaea"/>
<rect x="544.1" y="279.7" width="4.6" height="3.4" fill="#e9eaea"/>
<rect x="544.1" y="284.4" width="4.6" height="3.4" fill="#e9eaea"/>
<rect x="544.1" y="289.1" width="4.6" height="3.4" fill="#e9eaea"/>
<rect x="544.1" y="293.8" width="4.6" height="3.4" fill="#e9eaea"/>
<rect x="544.1" y="298.5" width="4.6" height="3.4" fill="#e9eaea"/>
<rect x="544.1" y="303.2" width="4.6" height="3.4" fill="#e9eaea"/>
<rect x="544.1" y="307.9" width="4.6" height="3.4" fill="#e9eaea"/>
<rect x="544.1" y="312.6" width="4.6" height="3.4" fill="#e9eaea"/>
<rect x="544.1" y="317.3" width="4.6" height="3.4" fill="#e9eaea"/>
<rect x="544.1" y="322.0" width="4.6" height="3.4" fill="#e9eaea"/>
<rect x="544.1" y="326.7" width="4.6" height="3.4" fill="#e9eaea"/>
<rect x="544.1" y="331.4" width="4.6" height="3.4" fill="#e9eaea"/>
<rect x="544.1" y="336.1" width="4.6" height="3.4" fill="#e9eaea"/>
<rect x="544.1" y="345.5" width="4.6" height="3.4" fill="#e9eaea"/>
<rect x="544.1" y="350.2" width="4.6" height="3.4" fill="#e9eaea"/>
<rect x="544.1" y="354.9" width="4.6" height="3.4" fill="#e9eaea"/>
<rect x="544.1" y="359.6" width="4.6" height="3.4" fill="#e9eaea"/>
<rect x="544.1" y="364.3" width="4.6" height="3.4" fill="#e9eaea"/>
<rect x="544.1" y="369.0" width="4.6" height="3.4" fill="#e9eaea"/>
<rect x="544.1" y="373.7" width="4.6" height="3.4" fill="#e9eaea"/>
<rect x="544.1" y="383.1" width="4.6" height="3.4" fill="#e9eaea"/>
<rect x="544.1" y="387.8" width="4.6" height="3.4" fill="#e9eaea"/>
<rect x="544.1" y="392.5" width="4.6" height="3.4" fill="#e9eaea"/>
<rect x="544.1" y="397.2" width="4.6" height="3.4" fill="#e9eaea"/>
<rect x="552.7" y="228.0" width="4.6" height="3.4" fill="#e9eaea"/>
<rect x="552.7" y="232.7" width="4.6" height="3.4" fill="#e9eaea"/>
<rect x="552.7" y="237.4" width="4.6" height="3.4" fill="#e9eaea"/>
<rect x="552.7" y="242.1" width="4.6" height="3.4" fill="#e9eaea"/>
<rect x="552.7" y="246.8" width="4.6" height="3.4" fill="#e9eaea"/>
<rect x="552.7" y="256.2" width="4.6" height="3.4" fill="#e9eaea"/>
<rect x="552.7" y="260.9" width="4.6" height="3.4" fill="#e9eaea"/>
<rect x="552.7" y="265.6" width="4.6" height="3.4" fill="#e9eaea"/>
<rect x="552.7" y="270.3" width="4.6" height="3.4" fill="#e9eaea"/>
<rect x="552.7" y="275.0" width="4.6" height="3.4" fill="#e9eaea"/>
<rect x="552.7" y="289.1" width="4.6" height="3.4" fill="#e9eaea"/>
<rect x="552.7" y="293.8" width="4.6" height="3.4" fill="#e9eaea"/>
<rect x="552.7" y="298.5" width="4.6" height="3.4" fill="#e9eaea"/>
<rect x="552.7" y="303.2" width="4.6" height="3.4" fill="#e9eaea"/>
<rect x="552.7" y="307.9" width="4.6" height="3.4" fill="#e9eaea"/>
<rect x="552.7" y="312.6" width="4.6" height="3.4" fill="#e9eaea"/>
<rect x="552.7" y="317.3" width="4.6" height="3.4" fill="#e9eaea"/>
<rect x="552.7" y="322.0" width="4.6" height="3.4" fill="#e9eaea"/>
<rect x="552.7" y="326.7" width="4.6" height="3.4" fill="#e9eaea"/>
<rect x="552.7" y="331.4" width="4.6" height="3.4" fill="#e9eaea"/>
<rect x="552.7" y="345.5" width="4.6" height="3.4" fill="#e9eaea"/>
<rect x="552.7" y="350.2" width="4.6" height="3.4" fill="#e9eaea"/>
<rect x="552.7" y="354.9" width="4.6" height="3.4" fill="#e9eaea"/>
<rect x="552.7" y="359.6" width="4.6" height="3.4" fill="#e9eaea"/>
<rect x="552.7" y="364.3" width="4.6" height="3.4" fill="#e9eaea"/>
<rect x="552.7" y="369.0" width="4.6" height="3.4" fill="#e9eaea"/>
<rect x="552.7" y="373.7" width="4.6" height="3.4" fill="#e9eaea"/>
<rect x="552.7" y="378.4" width="4.6" height="3.4" fill="#e9eaea"/>
<rect x="552.7" y="383.1" width="4.6" height="3.4" fill="#e9eaea"/>
<rect x="552.7" y="387.8" width="4.6" height="3.4" fill="#e9eaea"/>
<rect x="552.7" y="392.5" width="4.6" height="3.4" fill="#e9eaea"/>
<rect x="560.1" y="228.0" width="4.6" height="3.4" fill="#e9eaea"/>
<rect x="560.1" y="246.8" width="4.6" height="3.4" fill="#e9eaea"/>
<rect x="560.1" y="251.5" width="4.6" height="3.4" fill="#e9eaea"/>
<rect x="560.1" y="256.2" width="4.6" height="3.4" fill="#e9eaea"/>
<rect x="560.1" y="260.9" width="4.6" height="3.4" fill="#e9eaea"/>
<rect x="560.1" y="265.6" width="4.6" height="3.4" fill="#e9eaea"/>
<rect x="560.1" y="270.3" width="4.6" height="3.4" fill="#e9eaea"/>
<rect x="560.1" y="279.7" width="4.6" height="3.4" fill="#e9eaea"/>
<rect x="560.1" y="284.4" width="4.6" height="3.4" fill="#e9eaea"/>
<rect x="560.1" y="289.1" width="4.6" height="3.4" fill="#e9eaea"/>
<rect x="560.1" y="293.8" width="4.6" height="3.4" fill="#e9eaea"/>
<rect x="560.1" y="298.5" width="4.6" height="3.4" fill="#e9eaea"/>
<rect x="560.1" y="303.2" width="4.6" height="3.4" fill="#e9eaea"/>
<rect x="560.1" y="312.6" width="4.6" height="3.4" fill="#e9eaea"/>
<rect x="560.1" y="317.3" width="4.6" height="3.4" fill="#e9eaea"/>
<rect x="560.1" y="322.0" width="4.6" height="3.4" fill="#e9eaea"/>
<rect x="560.1" y="326.7" width="4.6" height="3.4" fill="#e9eaea"/>
<rect x="560.1" y="331.4" width="4.6" height="3.4" fill="#e9eaea"/>
<rect x="560.1" y="336.1" width="4.6" height="3.4" fill="#e9eaea"/>
<rect x="560.1" y="340.8" width="4.6" height="3.4" fill="#e9eaea"/>
<rect x="560.1" y="350.2" width="4.6" height="3.4" fill="#e9eaea"/>
<rect x="560.1" y="354.9" width="4.6" height="3.4" fill="#e9eaea"/>
<rect x="560.1" y="364.3" width="4.6" height="3.4" fill="#e9eaea"/>
<rect x="560.1" y="369.0" width="4.6" height="3.4" fill="#e9eaea"/>
<rect x="560.1" y="373.7" width="4.6" height="3.4" fill="#e9eaea"/>
<rect x="560.1" y="378.4" width="4.6" height="3.4" fill="#e9eaea"/>
<rect x="560.1" y="387.8" width="4.6" height="3.4" fill="#e9eaea"/>
<rect x="560.1" y="392.5" width="4.6" height="3.4" fill="#e9eaea"/>
<rect x="560.1" y="397.2" width="4.6" height="3.4" fill="#e9eaea"/>
<rect x="568.7" y="232.7" width="4.6" height="3.4" fill="#e9eaea"/>
<rect x="568.7" y="237.4" width="4.6" height="3.4" fill="#e9eaea"/>
<rect x="568.7" y="242.1" width="4.6" height="3.4" fill="#e9eaea"/>
<rect x="568.7" y="246.8" width="4.6" height="3.4" fill="#e9eaea"/>
<rect x="568.7" y="251.5" width="4.6" height="3.4" fill="#e9eaea"/>
<rect x="568.7" y="260.9" width="4.6" height="3.4" fill="#e9eaea"/>
<rect x="568.7" y="265.6" width="4.6" height="3.4" fill="#e9eaea"/>
<rect x="568.7" y="275.0" width="4.6" height="3.4" fill="#e9eaea"/>
<rect x="568.7" y="284.4" width="4.6" height="3.4" fill="#e9eaea"/>
<rect x="568.7" y="289.1" width="4.6" height="3.4" fill="#e9eaea"/>
<rect x="568.7" y="293.8" width="4.6" height="3.4" fill="#e9eaea"/>
<rect x="568.7" y="298.5" width="4.6" height="3.4" fill="#e9eaea"/>
<rect x="568.7" y="303.2" width="4.6" height="3.4" fill="#e9eaea"/>
<rect x="568.7" y="307.9" width="4.6" height="3.4" fill="#e9eaea"/>
<rect x="568.7" y="312.6" width="4.6" height="3.4" fill="#e9eaea"/>
<rect x="568.7" y="317.3" width="4.6" height="3.4" fill="#e9eaea"/>
<rect x="568.7" y="322.0" width="4.6" height="3.4" fill="#e9eaea"/>
<rect x="568.7" y="331.4" width="4.6" height="3.4" fill="#e9eaea"/>
<rect x="568.7" y="336.1" width="4.6" height="3.4" fill="#e9eaea"/>
<rect x="568.7" y="340.8" width="4.6" height="3.4" fill="#e9eaea"/>
<rect x="568.7" y="350.2" width="4.6" height="3.4" fill="#e9eaea"/>
<rect x="568.7" y="359.6" width="4.6" height="3.4" fill="#e9eaea"/>
<rect x="568.7" y="364.3" width="4.6" height="3.4" fill="#e9eaea"/>
<rect x="568.7" y="369.0" width="4.6" height="3.4" fill="#e9eaea"/>
<rect x="568.7" y="373.7" width="4.6" height="3.4" fill="#e9eaea"/>
<rect x="568.7" y="378.4" width="4.6" height="3.4" fill="#e9eaea"/>
<rect x="568.7" y="383.1" width="4.6" height="3.4" fill="#e9eaea"/>
<rect x="568.7" y="387.8" width="4.6" height="3.4" fill="#e9eaea"/>
<rect x="568.7" y="392.5" width="4.6" height="3.4" fill="#e9eaea"/>
<rect x="568.7" y="397.2" width="4.6" height="3.4" fill="#e9eaea"/>
<rect x="575.6" y="228.0" width="4.6" height="3.4" fill="#e9eaea"/>
<rect x="575.6" y="232.7" width="4.6" height="3.4" fill="#e9eaea"/>
<rect x="575.6" y="237.4" width="4.6" height="3.4" fill="#e9eaea"/>
<rect x="575.6" y="242.1" width="4.6" height="3.4" fill="#e9eaea"/>
<rect x="575.6" y="246.8" width="4.6" height="3.4" fill="#e9eaea"/>
<rect x="575.6" y="251.5" width="4.6" height="3.4" fill="#e9eaea"/>
<rect x="575.6" y="256.2" width="4.6" height="3.4" fill="#e9eaea"/>
<rect x="575.6" y="260.9" width="4.6" height="3.4" fill="#e9eaea"/>
<rect x="575.6" y="265.6" width="4.6" height="3.4" fill="#e9eaea"/>
<rect x="575.6" y="270.3" width="4.6" height="3.4" fill="#e9eaea"/>
<rect x="575.6" y="275.0" width="4.6" height="3.4" fill="#e9eaea"/>
<rect x="575.6" y="279.7" width="4.6" height="3.4" fill="#e9eaea"/>
<rect x="575.6" y="284.4" width="4.6" height="3.4" fill="#e9eaea"/>
<rect x="575.6" y="289.1" width="4.6" height="3.4" fill="#e9eaea"/>
<rect x="575.6" y="293.8" width="4.6" height="3.4" fill="#e9eaea"/>
<rect x="575.6" y="303.2" width="4.6" height="3.4" fill="#e9eaea"/>
<rect x="575.6" y="307.9" width="4.6" height="3.4" fill="#e9eaea"/>
<rect x="575.6" y="312.6" width="4.6" height="3.4" fill="#e9eaea"/>
<rect x="575.6" y="317.3" width="4.6" height="3.4" fill="#e9eaea"/>
<rect x="575.6" y="322.0" width="4.6" height="3.4" fill="#e9eaea"/>
<rect x="575.6" y="326.7" width="4.6" height="3.4" fill="#e9eaea"/>
<rect x="575.6" y="331.4" width="4.6" height="3.4" fill="#e9eaea"/>
<rect x="575.6" y="336.1" width="4.6" height="3.4" fill="#e9eaea"/>
<rect x="575.6" y="345.5" width="4.6" height="3.4" fill="#e9eaea"/>
<rect x="575.6" y="359.6" width="4.6" height="3.4" fill="#e9eaea"/>
<rect x="575.6" y="364.3" width="4.6" height="3.4" fill="#e9eaea"/>
<rect x="575.6" y="373.7" width="4.6" height="3.4" fill="#e9eaea"/>
<rect x="575.6" y="378.4" width="4.6" height="3.4" fill="#e9eaea"/>
<rect x="575.6" y="383.1" width="4.6" height="3.4" fill="#e9eaea"/>
<rect x="575.6" y="387.8" width="4.6" height="3.4" fill="#e9eaea"/>
<rect x="575.6" y="392.5" width="4.6" height="3.4" fill="#e9eaea"/>
<rect x="575.6" y="397.2" width="4.6" height="3.4" fill="#e9eaea"/>
<rect x="584.2" y="228.0" width="4.6" height="3.4" fill="#e9eaea"/>
<rect x="584.2" y="232.7" width="4.6" height="3.4" fill="#e9eaea"/>
<rect x="584.2" y="237.4" width="4.6" height="3.4" fill="#e9eaea"/>
<rect x="584.2" y="246.8" width="4.6" height="3.4" fill="#e9eaea"/>
<rect x="584.2" y="251.5" width="4.6" height="3.4" fill="#e9eaea"/>
<rect x="584.2" y="256.2" width="4.6" height="3.4" fill="#e9eaea"/>
<rect x="584.2" y="260.9" width="4.6" height="3.4" fill="#e9eaea"/>
<rect x="584.2" y="275.0" width="4.6" height="3.4" fill="#e9eaea"/>
<rect x="584.2" y="284.4" width="4.6" height="3.4" fill="#e9eaea"/>
<rect x="584.2" y="289.1" width="4.6" height="3.4" fill="#e9eaea"/>
<rect x="584.2" y="298.5" width="4.6" height="3.4" fill="#e9eaea"/>
<rect x="584.2" y="303.2" width="4.6" height="3.4" fill="#e9eaea"/>
<rect x="584.2" y="307.9" width="4.6" height="3.4" fill="#e9eaea"/>
<rect x="584.2" y="312.6" width="4.6" height="3.4" fill="#e9eaea"/>
<rect x="584.2" y="317.3" width="4.6" height="3.4" fill="#e9eaea"/>
<rect x="584.2" y="322.0" width="4.6" height="3.4" fill="#e9eaea"/>
<rect x="584.2" y="326.7" width="4.6" height="3.4" fill="#e9eaea"/>
<rect x="584.2" y="331.4" width="4.6" height="3.4" fill="#e9eaea"/>
<rect x="584.2" y="336.1" width="4.6" height="3.4" fill="#e9eaea"/>
<rect x="584.2" y="340.8" width="4.6" height="3.4" fill="#e9eaea"/>
<rect x="584.2" y="345.5" width="4.6" height="3.4" fill="#e9eaea"/>
<rect x="584.2" y="350.2" width="4.6" height="3.4" fill="#e9eaea"/>
<rect x="584.2" y="354.9" width="4.6" height="3.4" fill="#e9eaea"/>
<rect x="584.2" y="359.6" width="4.6" height="3.4" fill="#e9eaea"/>
<rect x="584.2" y="364.3" width="4.6" height="3.4" fill="#e9eaea"/>
<rect x="584.2" y="369.0" width="4.6" height="3.4" fill="#e9eaea"/>
<rect x="584.2" y="378.4" width="4.6" height="3.4" fill="#e9eaea"/>
<rect x="584.2" y="387.8" width="4.6" height="3.4" fill="#e9eaea"/>
<rect x="584.2" y="392.5" width="4.6" height="3.4" fill="#e9eaea"/>
<rect x="584.2" y="397.2" width="4.6" height="3.4" fill="#e9eaea"/>
<rect x="591.6" y="228.0" width="4.6" height="3.4" fill="#e9eaea"/>
<rect x="591.6" y="232.7" width="4.6" height="3.4" fill="#e9eaea"/>
<rect x="591.6" y="237.4" width="4.6" height="3.4" fill="#e9eaea"/>
<rect x="591.6" y="242.1" width="4.6" height="3.4" fill="#e9eaea"/>
<rect x="591.6" y="251.5" width="4.6" height="3.4" fill="#e9eaea"/>
<rect x="591.6" y="256.2" width="4.6" height="3.4" fill="#e9eaea"/>
<rect x="591.6" y="260.9" width="4.6" height="3.4" fill="#e9eaea"/>
<rect x="591.6" y="270.3" width="4.6" height="3.4" fill="#e9eaea"/>
<rect x="591.6" y="275.0" width="4.6" height="3.4" fill="#e9eaea"/>
<rect x="591.6" y="279.7" width="4.6" height="3.4" fill="#e9eaea"/>
<rect x="591.6" y="284.4" width="4.6" height="3.4" fill="#e9eaea"/>
<rect x="591.6" y="289.1" width="4.6" height="3.4" fill="#e9eaea"/>
<rect x="591.6" y="293.8" width="4.6" height="3.4" fill="#e9eaea"/>
<rect x="591.6" y="298.5" width="4.6" height="3.4" fill="#e9eaea"/>
<rect x="591.6" y="307.9" width="4.6" height="3.4" fill="#e9eaea"/>
<rect x="591.6" y="312.6" width="4.6" height="3.4" fill="#e9eaea"/>
<rect x="591.6" y="317.3" width="4.6" height="3.4" fill="#e9eaea"/>
<rect x="591.6" y="326.7" width="4.6" height="3.4" fill="#e9eaea"/>
<rect x="591.6" y="336.1" width="4.6" height="3.4" fill="#e9eaea"/>
<rect x="591.6" y="340.8" width="4.6" height="3.4" fill="#e9eaea"/>
<rect x="591.6" y="345.5" width="4.6" height="3.4" fill="#e9eaea"/>
<rect x="591.6" y="354.9" width="4.6" height="3.4" fill="#e9eaea"/>
<rect x="591.6" y="359.6" width="4.6" height="3.4" fill="#e9eaea"/>
<rect x="591.6" y="364.3" width="4.6" height="3.4" fill="#e9eaea"/>
<rect x="591.6" y="369.0" width="4.6" height="3.4" fill="#e9eaea"/>
<rect x="591.6" y="373.7" width="4.6" height="3.4" fill="#e9eaea"/>
<rect x="591.6" y="378.4" width="4.6" height="3.4" fill="#e9eaea"/>
<rect x="591.6" y="383.1" width="4.6" height="3.4" fill="#e9eaea"/>
<rect x="591.6" y="387.8" width="4.6" height="3.4" fill="#e9eaea"/>
<rect x="591.6" y="392.5" width="4.6" height="3.4" fill="#e9eaea"/>
<rect x="591.6" y="397.2" width="4.6" height="3.4" fill="#e9eaea"/>
<rect x="600.2" y="228.0" width="4.6" height="3.4" fill="#e9eaea"/>
<rect x="600.2" y="232.7" width="4.6" height="3.4" fill="#e9eaea"/>
<rect x="600.2" y="237.4" width="4.6" height="3.4" fill="#e9eaea"/>
<rect x="600.2" y="242.1" width="4.6" height="3.4" fill="#e9eaea"/>
<rect x="600.2" y="246.8" width="4.6" height="3.4" fill="#e9eaea"/>
<rect x="600.2" y="251.5" width="4.6" height="3.4" fill="#e9eaea"/>
<rect x="600.2" y="256.2" width="4.6" height="3.4" fill="#e9eaea"/>
<rect x="600.2" y="260.9" width="4.6" height="3.4" fill="#e9eaea"/>
<rect x="600.2" y="265.6" width="4.6" height="3.4" fill="#e9eaea"/>
<rect x="600.2" y="270.3" width="4.6" height="3.4" fill="#e9eaea"/>
<rect x="600.2" y="275.0" width="4.6" height="3.4" fill="#e9eaea"/>
<rect x="600.2" y="279.7" width="4.6" height="3.4" fill="#e9eaea"/>
<rect x="600.2" y="289.1" width="4.6" height="3.4" fill="#e9eaea"/>
<rect x="600.2" y="293.8" width="4.6" height="3.4" fill="#e9eaea"/>
<rect x="600.2" y="298.5" width="4.6" height="3.4" fill="#e9eaea"/>
<rect x="600.2" y="303.2" width="4.6" height="3.4" fill="#e9eaea"/>
<rect x="600.2" y="307.9" width="4.6" height="3.4" fill="#e9eaea"/>
<rect x="600.2" y="312.6" width="4.6" height="3.4" fill="#e9eaea"/>
<rect x="600.2" y="317.3" width="4.6" height="3.4" fill="#e9eaea"/>
<rect x="600.2" y="322.0" width="4.6" height="3.4" fill="#e9eaea"/>
<rect x="600.2" y="331.4" width="4.6" height="3.4" fill="#e9eaea"/>
<rect x="600.2" y="336.1" width="4.6" height="3.4" fill="#e9eaea"/>
<rect x="600.2" y="340.8" width="4.6" height="3.4" fill="#e9eaea"/>
<rect x="600.2" y="345.5" width="4.6" height="3.4" fill="#e9eaea"/>
<rect x="600.2" y="350.2" width="4.6" height="3.4" fill="#e9eaea"/>
<rect x="600.2" y="354.9" width="4.6" height="3.4" fill="#e9eaea"/>
<rect x="600.2" y="359.6" width="4.6" height="3.4" fill="#e9eaea"/>
<rect x="600.2" y="364.3" width="4.6" height="3.4" fill="#e9eaea"/>
<rect x="600.2" y="369.0" width="4.6" height="3.4" fill="#e9eaea"/>
<rect x="600.2" y="373.7" width="4.6" height="3.4" fill="#e9eaea"/>
<rect x="600.2" y="378.4" width="4.6" height="3.4" fill="#e9eaea"/>
<rect x="600.2" y="383.1" width="4.6" height="3.4" fill="#e9eaea"/>
<rect x="600.2" y="387.8" width="4.6" height="3.4" fill="#e9eaea"/>
<rect x="600.2" y="392.5" width="4.6" height="3.4" fill="#e9eaea"/>
<rect x="622.6" y="228.0" width="4.6" height="3.4" fill="#e9eaea"/>
<rect x="622.6" y="232.7" width="4.6" height="3.4" fill="#e9eaea"/>
<rect x="622.6" y="237.4" width="4.6" height="3.4" fill="#e9eaea"/>
<rect x="622.6" y="242.1" width="4.6" height="3.4" fill="#e9eaea"/>
<rect x="622.6" y="246.8" width="4.6" height="3.4" fill="#e9eaea"/>
<rect x="622.6" y="251.5" width="4.6" height="3.4" fill="#e9eaea"/>
<rect x="622.6" y="256.2" width="4.6" height="3.4" fill="#e9eaea"/>
<rect x="622.6" y="260.9" width="4.6" height="3.4" fill="#e9eaea"/>
<rect x="622.6" y="275.0" width="4.6" height="3.4" fill="#e9eaea"/>
<rect x="622.6" y="279.7" width="4.6" height="3.4" fill="#e9eaea"/>
<rect x="622.6" y="289.1" width="4.6" height="3.4" fill="#e9eaea"/>
<rect x="622.6" y="293.8" width="4.6" height="3.4" fill="#e9eaea"/>
<rect x="622.6" y="298.5" width="4.6" height="3.4" fill="#e9eaea"/>
<rect x="622.6" y="303.2" width="4.6" height="3.4" fill="#e9eaea"/>
<rect x="622.6" y="307.9" width="4.6" height="3.4" fill="#e9eaea"/>
<rect x="622.6" y="312.6" width="4.6" height="3.4" fill="#e9eaea"/>
<rect x="622.6" y="317.3" width="4.6" height="3.4" fill="#e9eaea"/>
<rect x="622.6" y="322.0" width="4.6" height="3.4" fill="#e9eaea"/>
<rect x="622.6" y="326.7" width="4.6" height="3.4" fill="#e9eaea"/>
<rect x="622.6" y="331.4" width="4.6" height="3.4" fill="#e9eaea"/>
<rect x="622.6" y="336.1" width="4.6" height="3.4" fill="#e9eaea"/>
<rect x="622.6" y="340.8" width="4.6" height="3.4" fill="#e9eaea"/>
<rect x="622.6" y="345.5" width="4.6" height="3.4" fill="#e9eaea"/>
<rect x="622.6" y="350.2" width="4.6" height="3.4" fill="#e9eaea"/>
<rect x="622.6" y="354.9" width="4.6" height="3.4" fill="#e9eaea"/>
<rect x="622.6" y="359.6" width="4.6" height="3.4" fill="#e9eaea"/>
<rect x="622.6" y="364.3" width="4.6" height="3.4" fill="#e9eaea"/>
<rect x="622.6" y="369.0" width="4.6" height="3.4" fill="#e9eaea"/>
<rect x="622.6" y="373.7" width="4.6" height="3.4" fill="#e9eaea"/>
<rect x="622.6" y="378.4" width="4.6" height="3.4" fill="#e9eaea"/>
<rect x="622.6" y="383.1" width="4.6" height="3.4" fill="#e9eaea"/>
<rect x="622.6" y="392.5" width="4.6" height="3.4" fill="#e9eaea"/>
<rect x="622.6" y="397.2" width="4.6" height="3.4" fill="#e9eaea"/>
<rect x="611.5" y="244.6" width="3.5" height="2.6" fill="#e9eaea"/>
<rect x="611.5" y="251.2" width="3.5" height="2.6" fill="#e9eaea"/>
<rect x="611.5" y="257.8" width="3.5" height="2.6" fill="#e9eaea"/>
<rect x="611.5" y="264.4" width="3.5" height="2.6" fill="#e9eaea"/>
<rect x="611.5" y="271.0" width="3.5" height="2.6" fill="#e9eaea"/>
<rect x="611.5" y="284.2" width="3.5" height="2.6" fill="#e9eaea"/>
<rect x="611.5" y="290.8" width="3.5" height="2.6" fill="#e9eaea"/>
<rect x="611.5" y="297.4" width="3.5" height="2.6" fill="#e9eaea"/>
<rect x="611.5" y="304.0" width="3.5" height="2.6" fill="#e9eaea"/>
<rect x="611.5" y="310.6" width="3.5" height="2.6" fill="#e9eaea"/>
<rect x="611.5" y="317.2" width="3.5" height="2.6" fill="#e9eaea"/>
<rect x="611.5" y="323.8" width="3.5" height="2.6" fill="#e9eaea"/>
<rect x="611.5" y="330.4" width="3.5" height="2.6" fill="#e9eaea"/>
<rect x="611.5" y="337.0" width="3.5" height="2.6" fill="#e9eaea"/>
<rect x="611.5" y="343.6" width="3.5" height="2.6" fill="#e9eaea"/>
<rect x="611.5" y="356.8" width="3.5" height="2.6" fill="#e9eaea"/>
<rect x="611.5" y="363.4" width="3.5" height="2.6" fill="#e9eaea"/>
<rect x="611.5" y="370.0" width="3.5" height="2.6" fill="#e9eaea"/>
<rect x="611.5" y="376.6" width="3.5" height="2.6" fill="#e9eaea"/>
<rect x="611.5" y="383.2" width="3.5" height="2.6" fill="#e9eaea"/>
<rect x="611.5" y="389.8" width="3.5" height="2.6" fill="#e9eaea"/>
<rect x="611.5" y="396.4" width="3.5" height="2.6" fill="#e9eaea"/>
<rect x="631.2" y="240.0" width="4.6" height="3.4" fill="#e9eaea"/>
<rect x="631.2" y="244.7" width="4.6" height="3.4" fill="#e9eaea"/>
<rect x="631.2" y="249.4" width="4.6" height="3.4" fill="#e9eaea"/>
<rect x="631.2" y="254.1" width="4.6" height="3.4" fill="#e9eaea"/>
<rect x="631.2" y="258.8" width="4.6" height="3.4" fill="#e9eaea"/>
<rect x="631.2" y="263.5" width="4.6" height="3.4" fill="#e9eaea"/>
<rect x="631.2" y="268.2" width="4.6" height="3.4" fill="#e9eaea"/>
<rect x="631.2" y="272.9" width="4.6" height="3.4" fill="#e9eaea"/>
<rect x="631.2" y="277.6" width="4.6" height="3.4" fill="#e9eaea"/>
<rect x="631.2" y="282.3" width="4.6" height="3.4" fill="#e9eaea"/>
<rect x="631.2" y="287.0" width="4.6" height="3.4" fill="#e9eaea"/>
<rect x="631.2" y="291.7" width="4.6" height="3.4" fill="#e9eaea"/>
<rect x="631.2" y="296.4" width="4.6" height="3.4" fill="#e9eaea"/>
<rect x="631.2" y="301.1" width="4.6" height="3.4" fill="#e9eaea"/>
<rect x="631.2" y="305.8" width="4.6" height="3.4" fill="#e9eaea"/>
<rect x="631.2" y="310.5" width="4.6" height="3.4" fill="#e9eaea"/>
<rect x="631.2" y="315.2" width="4.6" height="3.4" fill="#e9eaea"/>
<rect x="631.2" y="319.9" width="4.6" height="3.4" fill="#e9eaea"/>
<rect x="631.2" y="324.6" width="4.6" height="3.4" fill="#e9eaea"/>
<rect x="631.2" y="329.3" width="4.6" height="3.4" fill="#e9eaea"/>
<rect x="631.2" y="338.7" width="4.6" height="3.4" fill="#e9eaea"/>
<rect x="631.2" y="343.4" width="4.6" height="3.4" fill="#e9eaea"/>
<rect x="631.2" y="348.1" width="4.6" height="3.4" fill="#e9eaea"/>
<rect x="631.2" y="352.8" width="4.6" height="3.4" fill="#e9eaea"/>
<rect x="631.2" y="357.5" width="4.6" height="3.4" fill="#e9eaea"/>
<rect x="631.2" y="362.2" width="4.6" height="3.4" fill="#e9eaea"/>
<rect x="631.2" y="366.9" width="4.6" height="3.4" fill="#e9eaea"/>
<rect x="631.2" y="371.6" width="4.6" height="3.4" fill="#e9eaea"/>
<rect x="631.2" y="376.3" width="4.6" height="3.4" fill="#e9eaea"/>
<rect x="631.2" y="381.0" width="4.6" height="3.4" fill="#e9eaea"/>
<rect x="631.2" y="385.7" width="4.6" height="3.4" fill="#e9eaea"/>
<rect x="631.2" y="390.4" width="4.6" height="3.4" fill="#e9eaea"/>
<rect x="631.2" y="395.1" width="4.6" height="3.4" fill="#e9eaea"/>
<rect x="631.2" y="399.8" width="4.6" height="3.4" fill="#e9eaea"/>
<rect x="657.1" y="240.0" width="4.6" height="3.4" fill="#e9eaea"/>
<rect x="657.1" y="244.7" width="4.6" height="3.4" fill="#e9eaea"/>
<rect x="657.1" y="249.4" width="4.6" height="3.4" fill="#e9eaea"/>
<rect x="657.1" y="254.1" width="4.6" height="3.4" fill="#e9eaea"/>
<rect x="657.1" y="258.8" width="4.6" height="3.4" fill="#e9eaea"/>
<rect x="657.1" y="263.5" width="4.6" height="3.4" fill="#e9eaea"/>
<rect x="657.1" y="268.2" width="4.6" height="3.4" fill="#e9eaea"/>
<rect x="657.1" y="272.9" width="4.6" height="3.4" fill="#e9eaea"/>
<rect x="657.1" y="277.6" width="4.6" height="3.4" fill="#e9eaea"/>
<rect x="657.1" y="282.3" width="4.6" height="3.4" fill="#e9eaea"/>
<rect x="657.1" y="291.7" width="4.6" height="3.4" fill="#e9eaea"/>
<rect x="657.1" y="305.8" width="4.6" height="3.4" fill="#e9eaea"/>
<rect x="657.1" y="310.5" width="4.6" height="3.4" fill="#e9eaea"/>
<rect x="657.1" y="315.2" width="4.6" height="3.4" fill="#e9eaea"/>
<rect x="657.1" y="324.6" width="4.6" height="3.4" fill="#e9eaea"/>
<rect x="657.1" y="329.3" width="4.6" height="3.4" fill="#e9eaea"/>
<rect x="657.1" y="334.0" width="4.6" height="3.4" fill="#e9eaea"/>
<rect x="657.1" y="343.4" width="4.6" height="3.4" fill="#e9eaea"/>
<rect x="657.1" y="348.1" width="4.6" height="3.4" fill="#e9eaea"/>
<rect x="657.1" y="352.8" width="4.6" height="3.4" fill="#e9eaea"/>
<rect x="657.1" y="357.5" width="4.6" height="3.4" fill="#e9eaea"/>
<rect x="657.1" y="366.9" width="4.6" height="3.4" fill="#e9eaea"/>
<rect x="657.1" y="371.6" width="4.6" height="3.4" fill="#e9eaea"/>
<rect x="657.1" y="376.3" width="4.6" height="3.4" fill="#e9eaea"/>
<rect x="657.1" y="385.7" width="4.6" height="3.4" fill="#e9eaea"/>
<rect x="657.1" y="390.4" width="4.6" height="3.4" fill="#e9eaea"/>
<rect x="657.1" y="399.8" width="4.6" height="3.4" fill="#e9eaea"/>
<rect x="644.2" y="250.0" width="3.5" height="2.6" fill="#e9eaea"/>
<rect x="644.2" y="256.6" width="3.5" height="2.6" fill="#e9eaea"/>
<rect x="644.2" y="263.2" width="3.5" height="2.6" fill="#e9eaea"/>
<rect x="644.2" y="269.8" width="3.5" height="2.6" fill="#e9eaea"/>
<rect x="644.2" y="276.4" width="3.5" height="2.6" fill="#e9eaea"/>
<rect x="644.2" y="283.0" width="3.5" height="2.6" fill="#e9eaea"/>
<rect x="644.2" y="289.6" width="3.5" height="2.6" fill="#e9eaea"/>
<rect x="644.2" y="296.2" width="3.5" height="2.6" fill="#e9eaea"/>
<rect x="644.2" y="302.8" width="3.5" height="2.6" fill="#e9eaea"/>
<rect x="644.2" y="309.4" width="3.5" height="2.6" fill="#e9eaea"/>
<rect x="644.2" y="316.0" width="3.5" height="2.6" fill="#e9eaea"/>
<rect x="644.2" y="322.6" width="3.5" height="2.6" fill="#e9eaea"/>
<rect x="644.2" y="329.2" width="3.5" height="2.6" fill="#e9eaea"/>
<rect x="644.2" y="342.4" width="3.5" height="2.6" fill="#e9eaea"/>
<rect x="644.2" y="355.6" width="3.5" height="2.6" fill="#e9eaea"/>
<rect x="644.2" y="362.2" width="3.5" height="2.6" fill="#e9eaea"/>
<rect x="644.2" y="368.8" width="3.5" height="2.6" fill="#e9eaea"/>
<rect x="644.2" y="382.0" width="3.5" height="2.6" fill="#e9eaea"/>
<rect x="644.2" y="388.6" width="3.5" height="2.6" fill="#e9eaea"/>
<rect x="644.2" y="395.2" width="3.5" height="2.6" fill="#e9eaea"/>
<rect x="665.7" y="240.0" width="4.6" height="3.4" fill="#e9eaea"/>
<rect x="665.7" y="244.7" width="4.6" height="3.4" fill="#e9eaea"/>
<rect x="665.7" y="249.4" width="4.6" height="3.4" fill="#e9eaea"/>
<rect x="665.7" y="254.1" width="4.6" height="3.4" fill="#e9eaea"/>
<rect x="665.7" y="258.8" width="4.6" height="3.4" fill="#e9eaea"/>
<rect x="665.7" y="268.2" width="4.6" height="3.4" fill="#e9eaea"/>
<rect x="665.7" y="272.9" width="4.6" height="3.4" fill="#e9eaea"/>
<rect x="665.7" y="277.6" width="4.6" height="3.4" fill="#e9eaea"/>
<rect x="665.7" y="282.3" width="4.6" height="3.4" fill="#e9eaea"/>
<rect x="665.7" y="287.0" width="4.6" height="3.4" fill="#e9eaea"/>
<rect x="665.7" y="301.1" width="4.6" height="3.4" fill="#e9eaea"/>
<rect x="665.7" y="305.8" width="4.6" height="3.4" fill="#e9eaea"/>
<rect x="665.7" y="319.9" width="4.6" height="3.4" fill="#e9eaea"/>
<rect x="665.7" y="324.6" width="4.6" height="3.4" fill="#e9eaea"/>
<rect x="665.7" y="329.3" width="4.6" height="3.4" fill="#e9eaea"/>
<rect x="665.7" y="334.0" width="4.6" height="3.4" fill="#e9eaea"/>
<rect x="665.7" y="338.7" width="4.6" height="3.4" fill="#e9eaea"/>
<rect x="665.7" y="343.4" width="4.6" height="3.4" fill="#e9eaea"/>
<rect x="665.7" y="348.1" width="4.6" height="3.4" fill="#e9eaea"/>
<rect x="665.7" y="352.8" width="4.6" height="3.4" fill="#e9eaea"/>
<rect x="665.7" y="357.5" width="4.6" height="3.4" fill="#e9eaea"/>
<rect x="665.7" y="366.9" width="4.6" height="3.4" fill="#e9eaea"/>
<rect x="665.7" y="371.6" width="4.6" height="3.4" fill="#e9eaea"/>
<rect x="665.7" y="376.3" width="4.6" height="3.4" fill="#e9eaea"/>
<rect x="665.7" y="381.0" width="4.6" height="3.4" fill="#e9eaea"/>
<rect x="665.7" y="385.7" width="4.6" height="3.4" fill="#e9eaea"/>
<rect x="665.7" y="395.1" width="4.6" height="3.4" fill="#e9eaea"/>
<rect x="665.7" y="399.8" width="4.6" height="3.4" fill="#e9eaea"/>
<rect x="691.1" y="240.0" width="4.6" height="3.4" fill="#e9eaea"/>
<rect x="691.1" y="244.7" width="4.6" height="3.4" fill="#e9eaea"/>
<rect x="691.1" y="249.4" width="4.6" height="3.4" fill="#e9eaea"/>
<rect x="691.1" y="254.1" width="4.6" height="3.4" fill="#e9eaea"/>
<rect x="691.1" y="258.8" width="4.6" height="3.4" fill="#e9eaea"/>
<rect x="691.1" y="263.5" width="4.6" height="3.4" fill="#e9eaea"/>
<rect x="691.1" y="272.9" width="4.6" height="3.4" fill="#e9eaea"/>
<rect x="691.1" y="277.6" width="4.6" height="3.4" fill="#e9eaea"/>
<rect x="691.1" y="291.7" width="4.6" height="3.4" fill="#e9eaea"/>
<rect x="691.1" y="296.4" width="4.6" height="3.4" fill="#e9eaea"/>
<rect x="691.1" y="301.1" width="4.6" height="3.4" fill="#e9eaea"/>
<rect x="691.1" y="305.8" width="4.6" height="3.4" fill="#e9eaea"/>
<rect x="691.1" y="310.5" width="4.6" height="3.4" fill="#e9eaea"/>
<rect x="691.1" y="315.2" width="4.6" height="3.4" fill="#e9eaea"/>
<rect x="691.1" y="319.9" width="4.6" height="3.4" fill="#e9eaea"/>
<rect x="691.1" y="324.6" width="4.6" height="3.4" fill="#e9eaea"/>
<rect x="691.1" y="329.3" width="4.6" height="3.4" fill="#e9eaea"/>
<rect x="691.1" y="338.7" width="4.6" height="3.4" fill="#e9eaea"/>
<rect x="691.1" y="343.4" width="4.6" height="3.4" fill="#e9eaea"/>
<rect x="691.1" y="348.1" width="4.6" height="3.4" fill="#e9eaea"/>
<rect x="691.1" y="352.8" width="4.6" height="3.4" fill="#e9eaea"/>
<rect x="691.1" y="357.5" width="4.6" height="3.4" fill="#e9eaea"/>
<rect x="691.1" y="362.2" width="4.6" height="3.4" fill="#e9eaea"/>
<rect x="691.1" y="366.9" width="4.6" height="3.4" fill="#e9eaea"/>
<rect x="691.1" y="371.6" width="4.6" height="3.4" fill="#e9eaea"/>
<rect x="691.1" y="381.0" width="4.6" height="3.4" fill="#e9eaea"/>
<rect x="691.1" y="385.7" width="4.6" height="3.4" fill="#e9eaea"/>
<rect x="691.1" y="390.4" width="4.6" height="3.4" fill="#e9eaea"/>
<rect x="691.1" y="399.8" width="4.6" height="3.4" fill="#e9eaea"/>
<rect x="678.5" y="250.0" width="3.5" height="2.6" fill="#e9eaea"/>
<rect x="678.5" y="256.6" width="3.5" height="2.6" fill="#e9eaea"/>
<rect x="678.5" y="263.2" width="3.5" height="2.6" fill="#e9eaea"/>
<rect x="678.5" y="269.8" width="3.5" height="2.6" fill="#e9eaea"/>
<rect x="678.5" y="283.0" width="3.5" height="2.6" fill="#e9eaea"/>
<rect x="678.5" y="296.2" width="3.5" height="2.6" fill="#e9eaea"/>
<rect x="678.5" y="302.8" width="3.5" height="2.6" fill="#e9eaea"/>
<rect x="678.5" y="309.4" width="3.5" height="2.6" fill="#e9eaea"/>
<rect x="678.5" y="322.6" width="3.5" height="2.6" fill="#e9eaea"/>
<rect x="678.5" y="329.2" width="3.5" height="2.6" fill="#e9eaea"/>
<rect x="678.5" y="335.8" width="3.5" height="2.6" fill="#e9eaea"/>
<rect x="678.5" y="342.4" width="3.5" height="2.6" fill="#e9eaea"/>
<rect x="678.5" y="355.6" width="3.5" height="2.6" fill="#e9eaea"/>
<rect x="678.5" y="375.4" width="3.5" height="2.6" fill="#e9eaea"/>
<rect x="678.5" y="382.0" width="3.5" height="2.6" fill="#e9eaea"/>
<rect x="678.5" y="388.6" width="3.5" height="2.6" fill="#e9eaea"/>
<rect x="678.5" y="395.2" width="3.5" height="2.6" fill="#e9eaea"/>
<rect x="699.7" y="240.0" width="4.6" height="3.4" fill="#e9eaea"/>
<rect x="699.7" y="249.4" width="4.6" height="3.4" fill="#e9eaea"/>
<rect x="699.7" y="254.1" width="4.6" height="3.4" fill="#e9eaea"/>
<rect x="699.7" y="258.8" width="4.6" height="3.4" fill="#e9eaea"/>
<rect x="699.7" y="263.5" width="4.6" height="3.4" fill="#e9eaea"/>
<rect x="699.7" y="268.2" width="4.6" height="3.4" fill="#e9eaea"/>
<rect x="699.7" y="272.9" width="4.6" height="3.4" fill="#e9eaea"/>
<rect x="699.7" y="277.6" width="4.6" height="3.4" fill="#e9eaea"/>
<rect x="699.7" y="282.3" width="4.6" height="3.4" fill="#e9eaea"/>
<rect x="699.7" y="291.7" width="4.6" height="3.4" fill="#e9eaea"/>
<rect x="699.7" y="296.4" width="4.6" height="3.4" fill="#e9eaea"/>
<rect x="699.7" y="301.1" width="4.6" height="3.4" fill="#e9eaea"/>
<rect x="699.7" y="305.8" width="4.6" height="3.4" fill="#e9eaea"/>
<rect x="699.7" y="310.5" width="4.6" height="3.4" fill="#e9eaea"/>
<rect x="699.7" y="315.2" width="4.6" height="3.4" fill="#e9eaea"/>
<rect x="699.7" y="319.9" width="4.6" height="3.4" fill="#e9eaea"/>
<rect x="699.7" y="324.6" width="4.6" height="3.4" fill="#e9eaea"/>
<rect x="699.7" y="329.3" width="4.6" height="3.4" fill="#e9eaea"/>
<rect x="699.7" y="334.0" width="4.6" height="3.4" fill="#e9eaea"/>
<rect x="699.7" y="338.7" width="4.6" height="3.4" fill="#e9eaea"/>
<rect x="699.7" y="343.4" width="4.6" height="3.4" fill="#e9eaea"/>
<rect x="699.7" y="348.1" width="4.6" height="3.4" fill="#e9eaea"/>
<rect x="699.7" y="352.8" width="4.6" height="3.4" fill="#e9eaea"/>
<rect x="699.7" y="357.5" width="4.6" height="3.4" fill="#e9eaea"/>
<rect x="699.7" y="362.2" width="4.6" height="3.4" fill="#e9eaea"/>
<rect x="699.7" y="371.6" width="4.6" height="3.4" fill="#e9eaea"/>
<rect x="699.7" y="381.0" width="4.6" height="3.4" fill="#e9eaea"/>
<rect x="699.7" y="385.7" width="4.6" height="3.4" fill="#e9eaea"/>
<rect x="699.7" y="390.4" width="4.6" height="3.4" fill="#e9eaea"/>
<rect x="699.7" y="399.8" width="4.6" height="3.4" fill="#e9eaea"/>
<rect x="726.1" y="240.0" width="4.6" height="3.4" fill="#e9eaea"/>
<rect x="726.1" y="244.7" width="4.6" height="3.4" fill="#e9eaea"/>
<rect x="726.1" y="249.4" width="4.6" height="3.4" fill="#e9eaea"/>
<rect x="726.1" y="254.1" width="4.6" height="3.4" fill="#e9eaea"/>
<rect x="726.1" y="258.8" width="4.6" height="3.4" fill="#e9eaea"/>
<rect x="726.1" y="263.5" width="4.6" height="3.4" fill="#e9eaea"/>
<rect x="726.1" y="268.2" width="4.6" height="3.4" fill="#e9eaea"/>
<rect x="726.1" y="277.6" width="4.6" height="3.4" fill="#e9eaea"/>
<rect x="726.1" y="282.3" width="4.6" height="3.4" fill="#e9eaea"/>
<rect x="726.1" y="287.0" width="4.6" height="3.4" fill="#e9eaea"/>
<rect x="726.1" y="291.7" width="4.6" height="3.4" fill="#e9eaea"/>
<rect x="726.1" y="296.4" width="4.6" height="3.4" fill="#e9eaea"/>
<rect x="726.1" y="301.1" width="4.6" height="3.4" fill="#e9eaea"/>
<rect x="726.1" y="305.8" width="4.6" height="3.4" fill="#e9eaea"/>
<rect x="726.1" y="310.5" width="4.6" height="3.4" fill="#e9eaea"/>
<rect x="726.1" y="315.2" width="4.6" height="3.4" fill="#e9eaea"/>
<rect x="726.1" y="319.9" width="4.6" height="3.4" fill="#e9eaea"/>
<rect x="726.1" y="329.3" width="4.6" height="3.4" fill="#e9eaea"/>
<rect x="726.1" y="334.0" width="4.6" height="3.4" fill="#e9eaea"/>
<rect x="726.1" y="338.7" width="4.6" height="3.4" fill="#e9eaea"/>
<rect x="726.1" y="343.4" width="4.6" height="3.4" fill="#e9eaea"/>
<rect x="726.1" y="348.1" width="4.6" height="3.4" fill="#e9eaea"/>
<rect x="726.1" y="352.8" width="4.6" height="3.4" fill="#e9eaea"/>
<rect x="726.1" y="362.2" width="4.6" height="3.4" fill="#e9eaea"/>
<rect x="726.1" y="366.9" width="4.6" height="3.4" fill="#e9eaea"/>
<rect x="726.1" y="371.6" width="4.6" height="3.4" fill="#e9eaea"/>
<rect x="726.1" y="376.3" width="4.6" height="3.4" fill="#e9eaea"/>
<rect x="726.1" y="381.0" width="4.6" height="3.4" fill="#e9eaea"/>
<rect x="726.1" y="390.4" width="4.6" height="3.4" fill="#e9eaea"/>
<rect x="726.1" y="395.1" width="4.6" height="3.4" fill="#e9eaea"/>
<rect x="726.1" y="399.8" width="4.6" height="3.4" fill="#e9eaea"/>
<rect x="713.0" y="256.6" width="3.5" height="2.6" fill="#e9eaea"/>
<rect x="713.0" y="263.2" width="3.5" height="2.6" fill="#e9eaea"/>
<rect x="713.0" y="269.8" width="3.5" height="2.6" fill="#e9eaea"/>
<rect x="713.0" y="276.4" width="3.5" height="2.6" fill="#e9eaea"/>
<rect x="713.0" y="296.2" width="3.5" height="2.6" fill="#e9eaea"/>
<rect x="713.0" y="316.0" width="3.5" height="2.6" fill="#e9eaea"/>
<rect x="713.0" y="322.6" width="3.5" height="2.6" fill="#e9eaea"/>
<rect x="713.0" y="335.8" width="3.5" height="2.6" fill="#e9eaea"/>
<rect x="713.0" y="342.4" width="3.5" height="2.6" fill="#e9eaea"/>
<rect x="713.0" y="349.0" width="3.5" height="2.6" fill="#e9eaea"/>
<rect x="713.0" y="355.6" width="3.5" height="2.6" fill="#e9eaea"/>
<rect x="713.0" y="362.2" width="3.5" height="2.6" fill="#e9eaea"/>
<rect x="713.0" y="368.8" width="3.5" height="2.6" fill="#e9eaea"/>
<rect x="713.0" y="375.4" width="3.5" height="2.6" fill="#e9eaea"/>
<rect x="713.0" y="382.0" width="3.5" height="2.6" fill="#e9eaea"/>
<rect x="713.0" y="388.6" width="3.5" height="2.6" fill="#e9eaea"/>
<rect x="713.0" y="395.2" width="3.5" height="2.6" fill="#e9eaea"/>
<rect x="734.7" y="242.7" width="4.6" height="3.4" fill="#e9eaea"/>
<rect x="734.7" y="252.1" width="4.6" height="3.4" fill="#e9eaea"/>
<rect x="734.7" y="256.8" width="4.6" height="3.4" fill="#e9eaea"/>
<rect x="734.7" y="261.5" width="4.6" height="3.4" fill="#e9eaea"/>
<rect x="734.7" y="266.2" width="4.6" height="3.4" fill="#e9eaea"/>
<rect x="734.7" y="270.9" width="4.6" height="3.4" fill="#e9eaea"/>
<rect x="734.7" y="275.6" width="4.6" height="3.4" fill="#e9eaea"/>
<rect x="734.7" y="280.3" width="4.6" height="3.4" fill="#e9eaea"/>
<rect x="734.7" y="285.0" width="4.6" height="3.4" fill="#e9eaea"/>
<rect x="734.7" y="294.4" width="4.6" height="3.4" fill="#e9eaea"/>
<rect x="734.7" y="299.1" width="4.6" height="3.4" fill="#e9eaea"/>
<rect x="734.7" y="308.5" width="4.6" height="3.4" fill="#e9eaea"/>
<rect x="734.7" y="313.2" width="4.6" height="3.4" fill="#e9eaea"/>
<rect x="734.7" y="317.9" width="4.6" height="3.4" fill="#e9eaea"/>
<rect x="734.7" y="322.6" width="4.6" height="3.4" fill="#e9eaea"/>
<rect x="734.7" y="327.3" width="4.6" height="3.4" fill="#e9eaea"/>
<rect x="734.7" y="332.0" width="4.6" height="3.4" fill="#e9eaea"/>
<rect x="734.7" y="336.7" width="4.6" height="3.4" fill="#e9eaea"/>
<rect x="734.7" y="346.1" width="4.6" height="3.4" fill="#e9eaea"/>
<rect x="734.7" y="350.8" width="4.6" height="3.4" fill="#e9eaea"/>
<rect x="734.7" y="360.2" width="4.6" height="3.4" fill="#e9eaea"/>
<rect x="734.7" y="364.9" width="4.6" height="3.4" fill="#e9eaea"/>
<rect x="734.7" y="374.3" width="4.6" height="3.4" fill="#e9eaea"/>
<rect x="734.7" y="379.0" width="4.6" height="3.4" fill="#e9eaea"/>
<rect x="734.7" y="383.7" width="4.6" height="3.4" fill="#e9eaea"/>
<rect x="734.7" y="388.4" width="4.6" height="3.4" fill="#e9eaea"/>
<rect x="734.7" y="393.1" width="4.6" height="3.4" fill="#e9eaea"/>
<rect x="734.7" y="397.8" width="4.6" height="3.4" fill="#e9eaea"/>
<rect x="760.6" y="238.0" width="4.6" height="3.4" fill="#e9eaea"/>
<rect x="760.6" y="247.4" width="4.6" height="3.4" fill="#e9eaea"/>
<rect x="760.6" y="256.8" width="4.6" height="3.4" fill="#e9eaea"/>
<rect x="760.6" y="261.5" width="4.6" height="3.4" fill="#e9eaea"/>
<rect x="760.6" y="266.2" width="4.6" height="3.4" fill="#e9eaea"/>
<rect x="760.6" y="280.3" width="4.6" height="3.4" fill="#e9eaea"/>
<rect x="760.6" y="285.0" width="4.6" height="3.4" fill="#e9eaea"/>
<rect x="760.6" y="289.7" width="4.6" height="3.4" fill="#e9eaea"/>
<rect x="760.6" y="294.4" width="4.6" height="3.4" fill="#e9eaea"/>
<rect x="760.6" y="303.8" width="4.6" height="3.4" fill="#e9eaea"/>
<rect x="760.6" y="308.5" width="4.6" height="3.4" fill="#e9eaea"/>
<rect x="760.6" y="313.2" width="4.6" height="3.4" fill="#e9eaea"/>
<rect x="760.6" y="317.9" width="4.6" height="3.4" fill="#e9eaea"/>
<rect x="760.6" y="322.6" width="4.6" height="3.4" fill="#e9eaea"/>
<rect x="760.6" y="327.3" width="4.6" height="3.4" fill="#e9eaea"/>
<rect x="760.6" y="332.0" width="4.6" height="3.4" fill="#e9eaea"/>
<rect x="760.6" y="336.7" width="4.6" height="3.4" fill="#e9eaea"/>
<rect x="760.6" y="341.4" width="4.6" height="3.4" fill="#e9eaea"/>
<rect x="760.6" y="346.1" width="4.6" height="3.4" fill="#e9eaea"/>
<rect x="760.6" y="350.8" width="4.6" height="3.4" fill="#e9eaea"/>
<rect x="760.6" y="355.5" width="4.6" height="3.4" fill="#e9eaea"/>
<rect x="760.6" y="360.2" width="4.6" height="3.4" fill="#e9eaea"/>
<rect x="760.6" y="364.9" width="4.6" height="3.4" fill="#e9eaea"/>
<rect x="760.6" y="369.6" width="4.6" height="3.4" fill="#e9eaea"/>
<rect x="760.6" y="374.3" width="4.6" height="3.4" fill="#e9eaea"/>
<rect x="760.6" y="379.0" width="4.6" height="3.4" fill="#e9eaea"/>
<rect x="760.6" y="383.7" width="4.6" height="3.4" fill="#e9eaea"/>
<rect x="747.8" y="248.0" width="3.5" height="2.6" fill="#e9eaea"/>
<rect x="747.8" y="254.6" width="3.5" height="2.6" fill="#e9eaea"/>
<rect x="747.8" y="261.2" width="3.5" height="2.6" fill="#e9eaea"/>
<rect x="747.8" y="267.8" width="3.5" height="2.6" fill="#e9eaea"/>
<rect x="747.8" y="274.4" width="3.5" height="2.6" fill="#e9eaea"/>
<rect x="747.8" y="281.0" width="3.5" height="2.6" fill="#e9eaea"/>
<rect x="747.8" y="287.6" width="3.5" height="2.6" fill="#e9eaea"/>
<rect x="747.8" y="294.2" width="3.5" height="2.6" fill="#e9eaea"/>
<rect x="747.8" y="300.8" width="3.5" height="2.6" fill="#e9eaea"/>
<rect x="747.8" y="307.4" width="3.5" height="2.6" fill="#e9eaea"/>
<rect x="747.8" y="314.0" width="3.5" height="2.6" fill="#e9eaea"/>
<rect x="747.8" y="320.6" width="3.5" height="2.6" fill="#e9eaea"/>
<rect x="747.8" y="327.2" width="3.5" height="2.6" fill="#e9eaea"/>
<rect x="747.8" y="333.8" width="3.5" height="2.6" fill="#e9eaea"/>
<rect x="747.8" y="340.4" width="3.5" height="2.6" fill="#e9eaea"/>
<rect x="747.8" y="347.0" width="3.5" height="2.6" fill="#e9eaea"/>
<rect x="747.8" y="353.6" width="3.5" height="2.6" fill="#e9eaea"/>
<rect x="747.8" y="360.2" width="3.5" height="2.6" fill="#e9eaea"/>
<rect x="747.8" y="366.8" width="3.5" height="2.6" fill="#e9eaea"/>
<rect x="747.8" y="373.4" width="3.5" height="2.6" fill="#e9eaea"/>
<rect x="747.8" y="380.0" width="3.5" height="2.6" fill="#e9eaea"/>
<rect x="747.8" y="386.6" width="3.5" height="2.6" fill="#e9eaea"/>
<rect x="747.8" y="393.2" width="3.5" height="2.6" fill="#e9eaea"/>
<rect x="769.2" y="238.0" width="4.6" height="3.4" fill="#e9eaea"/>
<rect x="769.2" y="242.7" width="4.6" height="3.4" fill="#e9eaea"/>
<rect x="769.2" y="247.4" width="4.6" height="3.4" fill="#e9eaea"/>
<rect x="769.2" y="256.8" width="4.6" height="3.4" fill="#e9eaea"/>
<rect x="769.2" y="261.5" width="4.6" height="3.4" fill="#e9eaea"/>
<rect x="769.2" y="266.2" width="4.6" height="3.4" fill="#e9eaea"/>
<rect x="769.2" y="270.9" width="4.6" height="3.4" fill="#e9eaea"/>
<rect x="769.2" y="280.3" width="4.6" height="3.4" fill="#e9eaea"/>
<rect x="769.2" y="285.0" width="4.6" height="3.4" fill="#e9eaea"/>
<rect x="769.2" y="289.7" width="4.6" height="3.4" fill="#e9eaea"/>
<rect x="769.2" y="294.4" width="4.6" height="3.4" fill="#e9eaea"/>
<rect x="769.2" y="303.8" width="4.6" height="3.4" fill="#e9eaea"/>
<rect x="769.2" y="308.5" width="4.6" height="3.4" fill="#e9eaea"/>
<rect x="769.2" y="313.2" width="4.6" height="3.4" fill="#e9eaea"/>
<rect x="769.2" y="317.9" width="4.6" height="3.4" fill="#e9eaea"/>
<rect x="769.2" y="327.3" width="4.6" height="3.4" fill="#e9eaea"/>
<rect x="769.2" y="336.7" width="4.6" height="3.4" fill="#e9eaea"/>
<rect x="769.2" y="346.1" width="4.6" height="3.4" fill="#e9eaea"/>
<rect x="769.2" y="350.8" width="4.6" height="3.4" fill="#e9eaea"/>
<rect x="769.2" y="355.5" width="4.6" height="3.4" fill="#e9eaea"/>
<rect x="769.2" y="364.9" width="4.6" height="3.4" fill="#e9eaea"/>
<rect x="769.2" y="369.6" width="4.6" height="3.4" fill="#e9eaea"/>
<rect x="769.2" y="374.3" width="4.6" height="3.4" fill="#e9eaea"/>
<rect x="769.2" y="379.0" width="4.6" height="3.4" fill="#e9eaea"/>
<rect x="769.2" y="383.7" width="4.6" height="3.4" fill="#e9eaea"/>
<rect x="769.2" y="388.4" width="4.6" height="3.4" fill="#e9eaea"/>
<rect x="769.2" y="393.1" width="4.6" height="3.4" fill="#e9eaea"/>
<rect x="769.2" y="397.8" width="4.6" height="3.4" fill="#e9eaea"/>
<rect x="793.6" y="238.0" width="4.6" height="3.4" fill="#e9eaea"/>
<rect x="793.6" y="242.7" width="4.6" height="3.4" fill="#e9eaea"/>
<rect x="793.6" y="247.4" width="4.6" height="3.4" fill="#e9eaea"/>
<rect x="793.6" y="252.1" width="4.6" height="3.4" fill="#e9eaea"/>
<rect x="793.6" y="256.8" width="4.6" height="3.4" fill="#e9eaea"/>
<rect x="793.6" y="261.5" width="4.6" height="3.4" fill="#e9eaea"/>
<rect x="793.6" y="266.2" width="4.6" height="3.4" fill="#e9eaea"/>
<rect x="793.6" y="270.9" width="4.6" height="3.4" fill="#e9eaea"/>
<rect x="793.6" y="275.6" width="4.6" height="3.4" fill="#e9eaea"/>
<rect x="793.6" y="280.3" width="4.6" height="3.4" fill="#e9eaea"/>
<rect x="793.6" y="285.0" width="4.6" height="3.4" fill="#e9eaea"/>
<rect x="793.6" y="289.7" width="4.6" height="3.4" fill="#e9eaea"/>
<rect x="793.6" y="294.4" width="4.6" height="3.4" fill="#e9eaea"/>
<rect x="793.6" y="299.1" width="4.6" height="3.4" fill="#e9eaea"/>
<rect x="793.6" y="303.8" width="4.6" height="3.4" fill="#e9eaea"/>
<rect x="793.6" y="308.5" width="4.6" height="3.4" fill="#e9eaea"/>
<rect x="793.6" y="313.2" width="4.6" height="3.4" fill="#e9eaea"/>
<rect x="793.6" y="317.9" width="4.6" height="3.4" fill="#e9eaea"/>
<rect x="793.6" y="322.6" width="4.6" height="3.4" fill="#e9eaea"/>
<rect x="793.6" y="327.3" width="4.6" height="3.4" fill="#e9eaea"/>
<rect x="793.6" y="332.0" width="4.6" height="3.4" fill="#e9eaea"/>
<rect x="793.6" y="336.7" width="4.6" height="3.4" fill="#e9eaea"/>
<rect x="793.6" y="346.1" width="4.6" height="3.4" fill="#e9eaea"/>
<rect x="793.6" y="350.8" width="4.6" height="3.4" fill="#e9eaea"/>
<rect x="793.6" y="355.5" width="4.6" height="3.4" fill="#e9eaea"/>
<rect x="793.6" y="360.2" width="4.6" height="3.4" fill="#e9eaea"/>
<rect x="793.6" y="374.3" width="4.6" height="3.4" fill="#e9eaea"/>
<rect x="793.6" y="379.0" width="4.6" height="3.4" fill="#e9eaea"/>
<rect x="793.6" y="383.7" width="4.6" height="3.4" fill="#e9eaea"/>
<rect x="793.6" y="388.4" width="4.6" height="3.4" fill="#e9eaea"/>
<rect x="793.6" y="393.1" width="4.6" height="3.4" fill="#e9eaea"/>
<rect x="781.5" y="248.0" width="3.5" height="2.6" fill="#e9eaea"/>
<rect x="781.5" y="254.6" width="3.5" height="2.6" fill="#e9eaea"/>
<rect x="781.5" y="261.2" width="3.5" height="2.6" fill="#e9eaea"/>
<rect x="781.5" y="274.4" width="3.5" height="2.6" fill="#e9eaea"/>
<rect x="781.5" y="281.0" width="3.5" height="2.6" fill="#e9eaea"/>
<rect x="781.5" y="287.6" width="3.5" height="2.6" fill="#e9eaea"/>
<rect x="781.5" y="294.2" width="3.5" height="2.6" fill="#e9eaea"/>
<rect x="781.5" y="300.8" width="3.5" height="2.6" fill="#e9eaea"/>
<rect x="781.5" y="314.0" width="3.5" height="2.6" fill="#e9eaea"/>
<rect x="781.5" y="320.6" width="3.5" height="2.6" fill="#e9eaea"/>
<rect x="781.5" y="327.2" width="3.5" height="2.6" fill="#e9eaea"/>
<rect x="781.5" y="333.8" width="3.5" height="2.6" fill="#e9eaea"/>
<rect x="781.5" y="340.4" width="3.5" height="2.6" fill="#e9eaea"/>
<rect x="781.5" y="347.0" width="3.5" height="2.6" fill="#e9eaea"/>
<rect x="781.5" y="353.6" width="3.5" height="2.6" fill="#e9eaea"/>
<rect x="781.5" y="366.8" width="3.5" height="2.6" fill="#e9eaea"/>
<rect x="781.5" y="373.4" width="3.5" height="2.6" fill="#e9eaea"/>
<rect x="781.5" y="380.0" width="3.5" height="2.6" fill="#e9eaea"/>
<rect x="781.5" y="393.2" width="3.5" height="2.6" fill="#e9eaea"/>
<rect x="781.5" y="399.8" width="3.5" height="2.6" fill="#e9eaea"/>
<rect x="803.0" y="249.4" width="4.6" height="3.4" fill="#e9eaea"/>
<rect x="803.0" y="254.1" width="4.6" height="3.4" fill="#e9eaea"/>
<rect x="803.0" y="263.5" width="4.6" height="3.4" fill="#e9eaea"/>
<rect x="803.0" y="272.9" width="4.6" height="3.4" fill="#e9eaea"/>
<rect x="803.0" y="277.6" width="4.6" height="3.4" fill="#e9eaea"/>
<rect x="803.0" y="282.3" width="4.6" height="3.4" fill="#e9eaea"/>
<rect x="803.0" y="287.0" width="4.6" height="3.4" fill="#e9eaea"/>
<rect x="803.0" y="291.7" width="4.6" height="3.4" fill="#e9eaea"/>
<rect x="803.0" y="296.4" width="4.6" height="3.4" fill="#e9eaea"/>
<rect x="812.0" y="250.0" width="4.6" height="3.4" fill="#e9eaea"/>
<rect x="812.0" y="254.7" width="4.6" height="3.4" fill="#e9eaea"/>
<rect x="812.0" y="259.4" width="4.6" height="3.4" fill="#e9eaea"/>
<rect x="812.0" y="264.1" width="4.6" height="3.4" fill="#e9eaea"/>
<rect x="812.0" y="268.8" width="4.6" height="3.4" fill="#e9eaea"/>
<rect x="812.0" y="273.5" width="4.6" height="3.4" fill="#e9eaea"/>
<rect x="812.0" y="278.2" width="4.6" height="3.4" fill="#e9eaea"/>
<rect x="812.0" y="282.9" width="4.6" height="3.4" fill="#e9eaea"/>
<rect x="812.0" y="287.6" width="4.6" height="3.4" fill="#e9eaea"/>
<rect x="812.0" y="292.3" width="4.6" height="3.4" fill="#e9eaea"/>
<rect x="803.0" y="312.7" width="4.6" height="3.4" fill="#e9eaea"/>
<rect x="803.0" y="317.4" width="4.6" height="3.4" fill="#e9eaea"/>
<rect x="803.0" y="322.1" width="4.6" height="3.4" fill="#e9eaea"/>
<rect x="803.0" y="326.8" width="4.6" height="3.4" fill="#e9eaea"/>
<rect x="803.0" y="331.5" width="4.6" height="3.4" fill="#e9eaea"/>
<rect x="803.0" y="336.2" width="4.6" height="3.4" fill="#e9eaea"/>
<rect x="803.0" y="340.9" width="4.6" height="3.4" fill="#e9eaea"/>
<rect x="803.0" y="345.6" width="4.6" height="3.4" fill="#e9eaea"/>
<rect x="803.0" y="350.3" width="4.6" height="3.4" fill="#e9eaea"/>
<rect x="803.0" y="355.0" width="4.6" height="3.4" fill="#e9eaea"/>
<rect x="803.0" y="359.7" width="4.6" height="3.4" fill="#e9eaea"/>
<rect x="803.0" y="364.4" width="4.6" height="3.4" fill="#e9eaea"/>
<rect x="803.0" y="369.1" width="4.6" height="3.4" fill="#e9eaea"/>
<rect x="803.0" y="373.8" width="4.6" height="3.4" fill="#e9eaea"/>
<rect x="803.0" y="378.5" width="4.6" height="3.4" fill="#e9eaea"/>
<rect x="803.0" y="383.2" width="4.6" height="3.4" fill="#e9eaea"/>
<rect x="803.0" y="387.9" width="4.6" height="3.4" fill="#e9eaea"/>
<rect x="803.0" y="392.6" width="4.6" height="3.4" fill="#e9eaea"/>
<rect x="803.0" y="397.3" width="4.6" height="3.4" fill="#e9eaea"/>
<rect x="814.0" y="308.0" width="4.6" height="3.4" fill="#e9eaea"/>
<rect x="814.0" y="312.7" width="4.6" height="3.4" fill="#e9eaea"/>
<rect x="814.0" y="317.4" width="4.6" height="3.4" fill="#e9eaea"/>
<rect x="814.0" y="322.1" width="4.6" height="3.4" fill="#e9eaea"/>
<rect x="814.0" y="326.8" width="4.6" height="3.4" fill="#e9eaea"/>
<rect x="814.0" y="331.5" width="4.6" height="3.4" fill="#e9eaea"/>
<rect x="814.0" y="336.2" width="4.6" height="3.4" fill="#e9eaea"/>
<rect x="814.0" y="340.9" width="4.6" height="3.4" fill="#e9eaea"/>
<rect x="814.0" y="345.6" width="4.6" height="3.4" fill="#e9eaea"/>
<rect x="814.0" y="350.3" width="4.6" height="3.4" fill="#e9eaea"/>
<rect x="814.0" y="355.0" width="4.6" height="3.4" fill="#e9eaea"/>
<rect x="814.0" y="359.7" width="4.6" height="3.4" fill="#e9eaea"/>
<rect x="814.0" y="364.4" width="4.6" height="3.4" fill="#e9eaea"/>
<rect x="814.0" y="369.1" width="4.6" height="3.4" fill="#e9eaea"/>
<rect x="814.0" y="373.8" width="4.6" height="3.4" fill="#e9eaea"/>
<rect x="814.0" y="378.5" width="4.6" height="3.4" fill="#e9eaea"/>
<rect x="814.0" y="383.2" width="4.6" height="3.4" fill="#e9eaea"/>
<rect x="814.0" y="387.9" width="4.6" height="3.4" fill="#e9eaea"/>
<rect x="814.0" y="392.6" width="4.6" height="3.4" fill="#e9eaea"/>
<rect x="814.0" y="397.3" width="4.6" height="3.4" fill="#e9eaea"/>
<rect x="822.0" y="308.0" width="4.6" height="3.4" fill="#e9eaea"/>
<rect x="822.0" y="317.4" width="4.6" height="3.4" fill="#e9eaea"/>
<rect x="822.0" y="331.5" width="4.6" height="3.4" fill="#e9eaea"/>
<rect x="822.0" y="336.2" width="4.6" height="3.4" fill="#e9eaea"/>
<rect x="822.0" y="340.9" width="4.6" height="3.4" fill="#e9eaea"/>
<rect x="822.0" y="350.3" width="4.6" height="3.4" fill="#e9eaea"/>
<rect x="822.0" y="364.4" width="4.6" height="3.4" fill="#e9eaea"/>
<rect x="822.0" y="369.1" width="4.6" height="3.4" fill="#e9eaea"/>
<rect x="822.0" y="378.5" width="4.6" height="3.4" fill="#e9eaea"/>
<rect x="822.0" y="383.2" width="4.6" height="3.4" fill="#e9eaea"/>
<rect x="822.0" y="387.9" width="4.6" height="3.4" fill="#e9eaea"/>
<rect x="822.0" y="392.6" width="4.6" height="3.4" fill="#e9eaea"/>
<rect x="840.0" y="302.0" width="4" height="5" fill="#ebebeb"/>
<rect x="840.6" y="310.0" width="4" height="5" fill="#ebebeb"/>
<rect x="841.2" y="318.0" width="4" height="5" fill="#ebebeb"/>
<rect x="841.8" y="326.0" width="4" height="5" fill="#ebebeb"/>
<rect x="842.4" y="334.0" width="4" height="5" fill="#ebebeb"/>
<rect x="843.0" y="342.0" width="4" height="5" fill="#ebebeb"/>
<rect x="843.6" y="350.0" width="4" height="5" fill="#ebebeb"/>
<rect x="844.2" y="358.0" width="4" height="5" fill="#ebebeb"/>
<rect x="844.8" y="366.0" width="4" height="5" fill="#ebebeb"/>
<rect x="845.4" y="374.0" width="4" height="5" fill="#ebebeb"/>
<rect x="848.0" y="372.0" width="5" height="3.5" fill="#ebebeb" transform="rotate(-30 848.0 372.0)"/>
<rect x="856.0" y="367.4" width="5" height="3.5" fill="#ebebeb" transform="rotate(-30 856.0 367.4)"/>
<rect x="864.0" y="362.8" width="5" height="3.5" fill="#ebebeb" transform="rotate(-30 864.0 362.8)"/>
<rect x="872.0" y="358.2" width="5" height="3.5" fill="#ebebeb" transform="rotate(-30 872.0 358.2)"/>
<rect x="880.0" y="353.6" width="5" height="3.5" fill="#ebebeb" transform="rotate(-30 880.0 353.6)"/>
<rect x="888.0" y="349.0" width="5" height="3.5" fill="#ebebeb" transform="rotate(-30 888.0 349.0)"/>
<rect x="896.0" y="344.4" width="5" height="3.5" fill="#ebebeb" transform="rotate(-30 896.0 344.4)"/>
<rect x="904.0" y="339.8" width="5" height="3.5" fill="#ebebeb" transform="rotate(-30 904.0 339.8)"/>
<rect x="858.0" y="392.0" width="5" height="3.5" fill="#ebebeb" transform="rotate(-30 858.0 392.0)"/>
<rect x="866.0" y="387.5" width="5" height="3.5" fill="#ebebeb" transform="rotate(-30 866.0 387.5)"/>
<rect x="874.0" y="383.0" width="5" height="3.5" fill="#ebebeb" transform="rotate(-30 874.0 383.0)"/>
<rect x="882.0" y="378.5" width="5" height="3.5" fill="#ebebeb" transform="rotate(-30 882.0 378.5)"/>
<rect x="890.0" y="374.0" width="5" height="3.5" fill="#ebebeb" transform="rotate(-30 890.0 374.0)"/>
<rect x="898.0" y="369.5" width="5" height="3.5" fill="#ebebeb" transform="rotate(-30 898.0 369.5)"/>
<rect x="906.0" y="365.0" width="5" height="3.5" fill="#ebebeb" transform="rotate(-30 906.0 365.0)"/>
<path d="M514,251.8 L600,253 C614,250 626,244 642,239.2 C656,235 668,232.6 684,232.4 L720,234.4 L760,236 L805,233.6" fill="none" stroke="#ffffff" stroke-width="2.6" stroke-linecap="butt"/>
<path d="M514,295.3 L600,297.6 L663,299.2 L716,301 L828.5,304.7" fill="none" stroke="#ffffff" stroke-width="2.4" stroke-linecap="butt"/>
<path d="M529.5,224 L529.5,404.5" fill="none" stroke="#ffffff" stroke-width="1.6" stroke-linecap="butt"/>
<path d="M550.5,224 L550.5,404.5" fill="none" stroke="#ffffff" stroke-width="1.6" stroke-linecap="butt"/>
<path d="M566.5,224 L566.5,300 C566,340 565,370 558,404.5" fill="none" stroke="#ffffff" stroke-width="2.3" stroke-linecap="butt"/>
<path d="M582,253 L582,404.5" fill="none" stroke="#ffffff" stroke-width="2.2" stroke-linecap="butt"/>
<path d="M599,253 L596,404.5" fill="none" stroke="#ffffff" stroke-width="1.8" stroke-linecap="butt"/>
<path d="M630.2,240 L628.2,404.5" fill="none" stroke="#ffffff" stroke-width="1.8" stroke-linecap="butt"/>
<path d="M666.4,235 L662.6,404.5" fill="none" stroke="#ffffff" stroke-width="1.8" stroke-linecap="butt"/>
<path d="M700.2,233.5 L697,404.5" fill="none" stroke="#ffffff" stroke-width="1.8" stroke-linecap="butt"/>
<path d="M734.4,234.5 L731.3,404.5" fill="none" stroke="#ffffff" stroke-width="1.8" stroke-linecap="butt"/>
<path d="M767.6,235.5 L765.5,404.5" fill="none" stroke="#ffffff" stroke-width="1.8" stroke-linecap="butt"/>
<path d="M799.4,302 L797.7,404.5" fill="none" stroke="#ffffff" stroke-width="1.6" stroke-linecap="butt"/>
<path d="M767,270.5 L819,270.5" fill="none" stroke="#ffffff" stroke-width="1.6" stroke-linecap="butt"/>
<path d="M529.5,317 L566,317" fill="none" stroke="#ffffff" stroke-width="1.4" stroke-linecap="butt"/>
<path d="M514,339.5 L566,339.5" fill="none" stroke="#ffffff" stroke-width="1.6" stroke-linecap="butt"/>
<path d="M514,382.7 L563,382.7" fill="none" stroke="#ffffff" stroke-width="1.6" stroke-linecap="butt"/>
<path d="M808,224 L834.5,380 C836,390 840,392 846,384 C860,364 878,346 898,338.5 C905,336 910,335.5 916,335.5" fill="none" stroke="#ffffff" stroke-width="3.0" stroke-linecap="butt"/>
<path d="M835,385 L837,404.5" fill="none" stroke="#ffffff" stroke-width="2.4" stroke-linecap="butt"/>
<path d="M852,408 C870,392 895,378 916,372" fill="none" stroke="#ffffff" stroke-width="1.4" stroke-linecap="butt"/>
<path d="M903,243 L916,268" fill="none" stroke="#ffffff" stroke-width="1.4" stroke-linecap="butt"/>
<path d="M514,226 L624,226" fill="none" stroke="#ffffff" stroke-width="1.0" stroke-linecap="butt"/>
<text x="520.5" y="253.1" font-size="4.3" fill="#7d7d7d" textLength="26.0" lengthAdjust="spacingAndGlyphs">Shaftesbury Ave</text>
<text x="573.0" y="254.8" font-size="4.3" fill="#7d7d7d" textLength="26.0" lengthAdjust="spacingAndGlyphs">Shaftesbury Ave</text>
<text x="616.0" y="249.0" font-size="4.3" fill="#7d7d7d" textLength="24.0" lengthAdjust="spacingAndGlyphs" transform="rotate(-22 616.0 247.5)">Shaftesbury Ave</text>
<text x="672.0" y="232.9" font-size="4.3" fill="#7d7d7d" textLength="26.0" lengthAdjust="spacingAndGlyphs">Shaftesbury Ave</text>
<text x="734.0" y="237.1" font-size="4.3" fill="#7d7d7d" textLength="26.0" lengthAdjust="spacingAndGlyphs">Shaftesbury Ave</text>
<text x="776.0" y="235.3" font-size="4.3" fill="#7d7d7d" textLength="22.0" lengthAdjust="spacingAndGlyphs">Shaftesbury Ave</text>
<text x="516.0" y="296.7" font-size="4.3" fill="#7d7d7d" textLength="17.5" lengthAdjust="spacingAndGlyphs">Knowle Ave</text>
<text x="571.0" y="298.7" font-size="4.3" fill="#7d7d7d" textLength="18.0" lengthAdjust="spacingAndGlyphs">Knowle Ave</text>
<text x="622.0" y="300.9" font-size="4.3" fill="#7d7d7d" textLength="18.0" lengthAdjust="spacingAndGlyphs">Knowle Ave</text>
<text x="691.0" y="302.7" font-size="4.3" fill="#7d7d7d" textLength="18.0" lengthAdjust="spacingAndGlyphs">Knowle Ave</text>
<text x="753.5" y="304.3" font-size="4.3" fill="#7d7d7d" textLength="18.0" lengthAdjust="spacingAndGlyphs">Knowle Ave</text>
<text x="804.5" y="306.1" font-size="4.3" fill="#7d7d7d" textLength="18.0" lengthAdjust="spacingAndGlyphs">Knowle Ave</text>
<text x="515.0" y="340.8" font-size="4.3" fill="#7d7d7d" textLength="34.0" lengthAdjust="spacingAndGlyphs">Northumberland Ave</text>
<text x="514.5" y="383.9" font-size="4.3" fill="#7d7d7d" textLength="17.0" lengthAdjust="spacingAndGlyphs">Empress Dr</text>
<text x="794.5" y="271.9" font-size="4.3" fill="#7d7d7d" textLength="17.0" lengthAdjust="spacingAndGlyphs">Ashburn Ave</text>
<text x="0" y="1.3" font-size="3.6" fill="#7d7d7d" textLength="29" lengthAdjust="spacingAndGlyphs" transform="translate(810.5,243) rotate(72)">Devonshire Rd</text>
<text x="0" y="1.51" font-size="4.2" fill="#7d7d7d" textLength="13.0" lengthAdjust="spacingAndGlyphs" transform="translate(629.0,254.0) rotate(90)">Argyll Rd</text>
<text x="0" y="1.51" font-size="4.2" fill="#7d7d7d" textLength="15.0" lengthAdjust="spacingAndGlyphs" transform="translate(665.0,245.0) rotate(90)">Seaforth Rd</text>
<text x="0" y="1.51" font-size="4.2" fill="#7d7d7d" textLength="15.0" lengthAdjust="spacingAndGlyphs" transform="translate(699.0,245.0) rotate(90)">Chester Ave</text>
<text x="0" y="1.51" font-size="4.2" fill="#7d7d7d" textLength="12.0" lengthAdjust="spacingAndGlyphs" transform="translate(733.0,241.0) rotate(90)">Calder Rd</text>
<text x="0" y="1.51" font-size="4.2" fill="#7d7d7d" textLength="15.0" lengthAdjust="spacingAndGlyphs" transform="translate(766.7,241.0) rotate(90)">Pendle Ave</text>
<text x="0" y="1.51" font-size="4.2" fill="#7d7d7d" textLength="16.0" lengthAdjust="spacingAndGlyphs" transform="translate(598.0,305.0) rotate(90)">Cornwall Ave</text>
<text x="0" y="1.51" font-size="4.2" fill="#7d7d7d" textLength="16.0" lengthAdjust="spacingAndGlyphs" transform="translate(598.0,342.0) rotate(90)">Cornwall Ave</text>
<text x="0" y="1.51" font-size="4.2" fill="#7d7d7d" textLength="12.0" lengthAdjust="spacingAndGlyphs" transform="translate(629.0,305.0) rotate(90)">Argyll Rd</text>
<text x="0" y="1.51" font-size="4.2" fill="#7d7d7d" textLength="12.0" lengthAdjust="spacingAndGlyphs" transform="translate(629.0,349.0) rotate(90)">Argyll Rd</text>
<text x="0" y="1.51" font-size="4.2" fill="#7d7d7d" textLength="15.0" lengthAdjust="spacingAndGlyphs" transform="translate(665.0,305.0) rotate(90)">Seaforth Rd</text>
<text x="0" y="1.51" font-size="4.2" fill="#7d7d7d" textLength="15.0" lengthAdjust="spacingAndGlyphs" transform="translate(665.0,344.0) rotate(90)">Seaforth Rd</text>
<text x="0" y="1.51" font-size="4.2" fill="#7d7d7d" textLength="15.0" lengthAdjust="spacingAndGlyphs" transform="translate(699.0,304.0) rotate(90)">Chester Ave</text>
<text x="0" y="1.51" font-size="4.2" fill="#7d7d7d" textLength="15.0" lengthAdjust="spacingAndGlyphs" transform="translate(699.0,358.0) rotate(90)">Chester Ave</text>
<text x="0" y="1.51" font-size="4.2" fill="#7d7d7d" textLength="12.0" lengthAdjust="spacingAndGlyphs" transform="translate(733.0,307.0) rotate(90)">Calder Rd</text>
<text x="0" y="1.51" font-size="4.2" fill="#7d7d7d" textLength="12.0" lengthAdjust="spacingAndGlyphs" transform="translate(733.0,355.0) rotate(90)">Calder Rd</text>
<text x="0" y="1.51" font-size="4.2" fill="#7d7d7d" textLength="15.0" lengthAdjust="spacingAndGlyphs" transform="translate(766.7,309.0) rotate(90)">Pendle Ave</text>
<text x="0" y="1.51" font-size="4.2" fill="#7d7d7d" textLength="15.0" lengthAdjust="spacingAndGlyphs" transform="translate(766.7,350.0) rotate(90)">Pendle Ave</text>
<text x="0" y="1.51" font-size="4.2" fill="#7d7d7d" textLength="15.0" lengthAdjust="spacingAndGlyphs" transform="translate(798.5,309.0) rotate(90)">Ashburn Rd</text>
<text x="0" y="1.51" font-size="4.2" fill="#7d7d7d" textLength="15.0" lengthAdjust="spacingAndGlyphs" transform="translate(798.5,349.0) rotate(90)">Ashburn Rd</text>
<text x="0" y="1.3" font-size="3.6" fill="#7d7d7d" textLength="15" lengthAdjust="spacingAndGlyphs" transform="translate(566,384) rotate(-90)">Warbreck Dr</text>
<text x="0" y="1.3" font-size="3.6" fill="#7d7d7d" textLength="10" lengthAdjust="spacingAndGlyphs" transform="translate(846,383) rotate(-55)">Leys Rd</text>
<text x="0" y="1.3" font-size="3.6" fill="#7d7d7d" textLength="10" lengthAdjust="spacingAndGlyphs" transform="translate(886,344) rotate(-33)">Leys Rd</text>
<text x="0" y="1.3" font-size="3.8" fill="#7d7d7d" textLength="8" lengthAdjust="spacingAndGlyphs" transform="translate(838,402) rotate(-90)">S124</text>
<text x="564.0" y="278.6" font-size="4.9" fill="#6d7b82" textLength="44.0" lengthAdjust="spacingAndGlyphs">Langdale Free School</text>
<text x="819.5" y="228.5" font-size="4.8" fill="#3f9a45" textLength="29.0" lengthAdjust="spacingAndGlyphs">Rock Gardens</text>
<path d="M571.2,285 C570.4,283.6 568.6,282.6 568.6,281 A2.6,2.6 0 0 1 573.8,281 C573.8,282.6 572,283.6 571.2,285 Z" fill="#5b8ea6"/><circle cx="571.2" cy="281" r="1.3" fill="#e8f0f4"/>
<circle cx="563.6" cy="228.8" r="2.1" fill="#57b3ec"/><rect x="562.8" y="227.9" width="1.6" height="1.6" fill="#e8f5fd"/>
<circle cx="570.5" cy="224.3" r="2.1" fill="#57b3ec"/><rect x="569.7" y="223.4" width="1.6" height="1.6" fill="#e8f5fd"/>
<rect x="806.1" y="239.4" width="3.4" height="3.4" rx="0.4" fill="#4ea8e8"/><rect x="807.0" y="240.3" width="1.6" height="1.4" fill="#dff0fc"/>
<rect x="811.6" y="237.5" width="3.4" height="3.4" rx="0.4" fill="#4ea8e8"/><rect x="812.5" y="238.4" width="1.6" height="1.4" fill="#dff0fc"/>
<rect x="565.8" y="385.8" width="3.4" height="3.4" rx="0.4" fill="#4ea8e8"/><rect x="566.7" y="386.7" width="1.6" height="1.4" fill="#dff0fc"/>
<rect x="554.0" y="391.9" width="3.4" height="3.4" rx="0.4" fill="#4ea8e8"/><rect x="554.9" y="392.8" width="1.6" height="1.4" fill="#dff0fc"/>
<path d="M815,227.5 l-1.8,-2.6 a1.8,1.8 0 1,1 3.6,0z" fill="#52a852"/>
<path d="M637.9,271 C636.5,267.8 632.8,265.5 632.8,262 A5.1,5.1 0 0 1 643,262 C643,265.5 639.3,267.8 637.9,271 Z" fill="#c0262c"/>
<rect x="635.6" y="259.9" width="4.6" height="3.3" fill="none" stroke="#f6dede" stroke-width="0.7"/>
<path d="M789.6,356 C788.2,352.6 784.4,350.3 784.4,346.4 A5.2,5.2 0 0 1 794.8,346.4 C794.8,350.3 791,352.6 789.6,356 Z" fill="#6ebd3a"/>
<rect x="787.2" y="344.4" width="4.8" height="3.2" fill="none" stroke="#f0f8e8" stroke-width="0.7"/>
<rect x="517.8" y="227.1" width="40.2" height="9.4" fill="#ffffff"/>
<rect x="531.1" y="227.8" width="0.4" height="8" fill="#eeeeee"/><rect x="544.5" y="227.8" width="0.4" height="8" fill="#eeeeee"/>
<path d="M522.6,233.7 v-2.2 l1.7,-1.5 l1.7,1.5 v2.2z" fill="#555"/>
<circle cx="537.8" cy="231.8" r="1.5" fill="none" stroke="#666" stroke-width="0.7"/><path d="M535.6,231.8 h4.4 M537.8,229.6 v4.4" stroke="#666" stroke-width="0.4"/>
<circle cx="550.7" cy="231.5" r="1.4" fill="none" stroke="#555" stroke-width="0.7"/><path d="M551.7,232.5 l1.4,1.4" stroke="#555" stroke-width="0.8"/>
<rect x="853.9" y="228" width="57.1" height="12.4" fill="#ffffff"/>
<rect x="877.6" y="228" width="0.5" height="12.4" fill="#ebebeb"/>
<text x="859.80" y="236.14" font-size="5.4" fill="#222" font-weight="bold" textLength="10.60" lengthAdjust="spacingAndGlyphs">Map</text>
<text x="883.20" y="236.14" font-size="5.4" fill="#5a5a5a" textLength="24.50" lengthAdjust="spacingAndGlyphs">Satellite</text>
<rect x="898.2" y="247.5" width="12.8" height="12.3" fill="#ffffff"/>
<path d="M902.2,251.8 v-1.3 h1.3 M905.9,250.5 h1.3 v1.3 M907.2,255.5 v1.3 h-1.3 M903.5,256.8 h-1.3 v-1.3" fill="none" stroke="#666" stroke-width="0.6"/>
<rect x="897.8" y="370.4" width="13.2" height="25.6" fill="#ffffff"/>
<rect x="899.6" y="383.1" width="9.6" height="0.4" fill="#e6e6e6"/>
<path d="M902.2,376.7 h4.4 M904.4,374.5 v4.4" stroke="#666" stroke-width="0.8"/>
<path d="M902.2,389.6 h4.4" stroke="#666" stroke-width="0.8"/>
<text x="516.5" y="401.6" font-size="5.6" font-weight="bold" textLength="20.5" lengthAdjust="spacingAndGlyphs"><tspan fill="#4a86e8">G</tspan><tspan fill="#e54b3c">o</tspan><tspan fill="#f3b42c">o</tspan><tspan fill="#4a86e8">g</tspan><tspan fill="#3aa757">l</tspan><tspan fill="#e54b3c">e</tspan></text>
<rect x="780" y="400" width="134.6" height="4.5" fill="#f4f4f4" opacity="0.8"/>
<text x="783.5" y="403.3" font-size="3" fill="#8a8a8a" textLength="36.0" lengthAdjust="spacingAndGlyphs">Map Data ©2019 Google</text>
<text x="823.0" y="403.3" font-size="3" fill="#8a8a8a" textLength="6.0" lengthAdjust="spacingAndGlyphs">50 m</text>
<rect x="830" y="401.8" width="16" height="0.9" fill="#9a9a9a"/>
<text x="860.5" y="403.3" font-size="3" fill="#8a8a8a" textLength="16.5" lengthAdjust="spacingAndGlyphs">Terms of Use</text>
<text x="885.0" y="403.3" font-size="3" fill="#8a8a8a" textLength="26.5" lengthAdjust="spacingAndGlyphs">Report a map error</text>
</g>
<text x="424.4" y="509.4" font-size="4.8" fill="#a6a6a6" textLength="175.2" lengthAdjust="spacingAndGlyphs">Last login: <tspan fill="#2f9fbd">0 second ago</tspan> from 82.36.43.91 (Blackpool, United Kingdom). <tspan fill="#2f9fbd">Make a wish</tspan></text>
<text x="434.1" y="517.4" font-size="4.8" fill="#e0e0e0" textLength="155.7" lengthAdjust="spacingAndGlyphs">© 2019 Zyxel Communications Corp. | <tspan font-weight="bold">Build version:</tspan> production 20190514-035720</text>
<rect x="0" y="519" width="1024" height="10" fill="#245b7e"/>
<rect x="16" y="528" width="114" height="1" fill="#4a7d9c"/>
<text x="378.3" y="526" font-size="4.8" fill="#e8eef2" textLength="233.7" lengthAdjust="spacingAndGlyphs">We use cookies to improve your experience. By your continued use of this site you accept such use. <tspan fill="#49b3cc">Learn more.</tspan></text>
<rect x="615.1" y="520.1" width="30.9" height="7.6" rx="1" fill="#55b5c4"/>
<text x="617.20" y="525.63" font-size="4.8" fill="#f2fafb" textLength="26.80" lengthAdjust="spacingAndGlyphs">I Understand</text>
<path d="M23.6,140.3 L23.6,145.2 L24.8,144.1 L25.7,146 L26.5,145.6 L25.6,143.7 L27.2,143.6 Z" fill="#f4f4f4" stroke="#111" stroke-width="0.4"/>
</svg>
</body></html>
